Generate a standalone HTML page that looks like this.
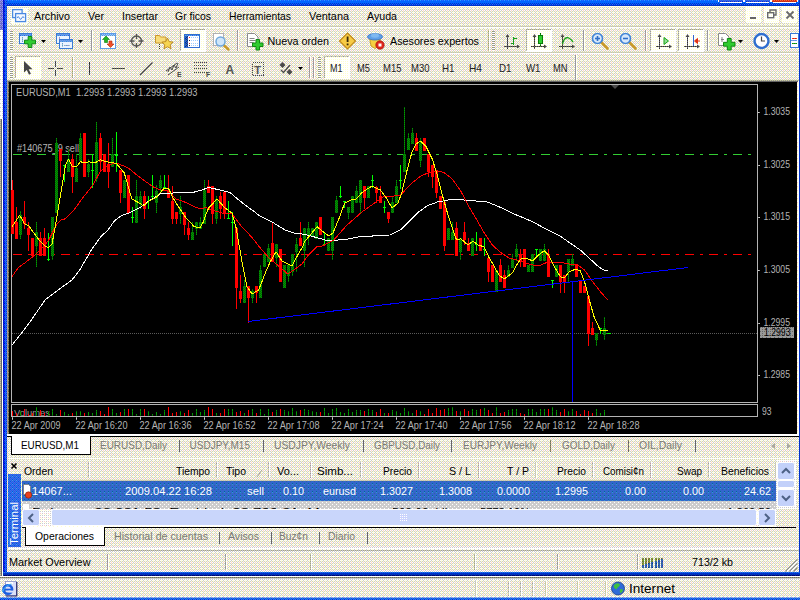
<!DOCTYPE html><html><head><meta charset="utf-8"><title>MetaTrader</title><style>html,body{margin:0;padding:0;background:#ECE9D8;overflow:hidden}svg{display:block}text{font-family:"Liberation Sans",sans-serif;white-space:pre}</style></head><body><svg width="800" height="600" viewBox="0 0 800 600" font-family="'Liberation Sans', sans-serif" shape-rendering="crispEdges"><defs><pattern id="pp" width="4" height="4" patternUnits="userSpaceOnUse"><rect width="4" height="4" fill="#FFFFFF"/><rect x="1" y="1" width="1" height="1" fill="#FFFFCC"/><rect x="3" y="1" width="1" height="1" fill="#FFFFCC"/><rect x="1" y="3" width="1" height="1" fill="#FFFFCC"/><rect x="3" y="3" width="1" height="1" fill="#FFFFCC"/></pattern><pattern id="p1" width="4" height="4" patternUnits="userSpaceOnUse"><rect width="4" height="4" fill="#CCCCCC"/><rect x="0" y="0" width="1" height="1" fill="#FFFFFF"/><rect x="1" y="0" width="1" height="1" fill="#FFFFCC"/><rect x="2" y="0" width="1" height="1" fill="#FFFFFF"/><rect x="1" y="1" width="1" height="1" fill="#FFFFCC"/><rect x="3" y="1" width="1" height="1" fill="#FFFFCC"/><rect x="0" y="2" width="1" height="1" fill="#FFFFFF"/><rect x="2" y="2" width="1" height="1" fill="#FFFFFF"/><rect x="3" y="2" width="1" height="1" fill="#FFCCCC"/><rect x="1" y="3" width="1" height="1" fill="#FFFFCC"/><rect x="3" y="3" width="1" height="1" fill="#FFFFCC"/></pattern><pattern id="p2" width="4" height="4" patternUnits="userSpaceOnUse"><rect width="4" height="4" fill="#6666CC"/><rect x="0" y="0" width="1" height="1" fill="#9999FF"/><rect x="2" y="0" width="1" height="1" fill="#9999FF"/><rect x="1" y="1" width="1" height="1" fill="#9999CC"/><rect x="0" y="2" width="1" height="1" fill="#9999CC"/><rect x="2" y="2" width="1" height="1" fill="#9999FF"/></pattern><pattern id="p3" width="4" height="4" patternUnits="userSpaceOnUse"><rect width="4" height="4" fill="#FFFFFF"/><rect x="2" y="1" width="1" height="1" fill="#CCCCCC"/><rect x="0" y="3" width="1" height="1" fill="#CCCCCC"/><rect x="2" y="3" width="1" height="1" fill="#CCCCCC"/></pattern><pattern id="p4" width="4" height="4" patternUnits="userSpaceOnUse"><rect width="4" height="4" fill="#999999"/><rect x="0" y="0" width="1" height="1" fill="#CCCC99"/><rect x="2" y="0" width="1" height="1" fill="#CCCC99"/><rect x="1" y="1" width="1" height="1" fill="#CCCC99"/><rect x="0" y="2" width="1" height="1" fill="#CCCC99"/><rect x="2" y="2" width="1" height="1" fill="#CCCC99"/><rect x="3" y="3" width="1" height="1" fill="#CC9999"/></pattern><pattern id="p5" width="4" height="4" patternUnits="userSpaceOnUse"><rect width="4" height="4" fill="#666666"/><rect x="0" y="0" width="1" height="1" fill="#999966"/><rect x="2" y="0" width="1" height="1" fill="#999966"/><rect x="2" y="2" width="1" height="1" fill="#999966"/><rect x="0" y="3" width="1" height="1" fill="#666633"/></pattern><pattern id="p6" width="4" height="4" patternUnits="userSpaceOnUse"><rect width="4" height="4" fill="#FFFFFF"/></pattern><pattern id="p7" width="4" height="4" patternUnits="userSpaceOnUse"><rect width="4" height="4" fill="#0066FF"/><rect x="0" y="0" width="1" height="1" fill="#3399FF"/><rect x="2" y="0" width="1" height="1" fill="#3366FF"/><rect x="2" y="1" width="1" height="1" fill="#0066CC"/><rect x="2" y="2" width="1" height="1" fill="#3399FF"/><rect x="0" y="3" width="1" height="1" fill="#0066CC"/></pattern><pattern id="p8" width="4" height="4" patternUnits="userSpaceOnUse"><rect width="4" height="4" fill="#0066FF"/></pattern><pattern id="p9" width="4" height="4" patternUnits="userSpaceOnUse"><rect width="4" height="4" fill="#0033CC"/><rect x="0" y="0" width="1" height="1" fill="#3366FF"/><rect x="1" y="0" width="1" height="1" fill="#0066CC"/><rect x="2" y="0" width="1" height="1" fill="#0066FF"/><rect x="1" y="1" width="1" height="1" fill="#0066FF"/><rect x="3" y="1" width="1" height="1" fill="#0066FF"/><rect x="0" y="2" width="1" height="1" fill="#0066FF"/><rect x="2" y="2" width="1" height="1" fill="#3366FF"/><rect x="1" y="3" width="1" height="1" fill="#0066FF"/><rect x="3" y="3" width="1" height="1" fill="#0066FF"/></pattern><pattern id="p10" width="4" height="4" patternUnits="userSpaceOnUse"><rect width="4" height="4" fill="#0033CC"/><rect x="0" y="0" width="1" height="1" fill="#3366FF"/><rect x="2" y="0" width="1" height="1" fill="#0066FF"/><rect x="1" y="1" width="1" height="1" fill="#0066FF"/><rect x="0" y="2" width="1" height="1" fill="#0066FF"/><rect x="2" y="2" width="1" height="1" fill="#0066FF"/></pattern><pattern id="p11" width="4" height="4" patternUnits="userSpaceOnUse"><rect width="4" height="4" fill="#0033CC"/><rect x="0" y="0" width="1" height="1" fill="#3366FF"/><rect x="2" y="2" width="1" height="1" fill="#0066CC"/></pattern><pattern id="p12" width="4" height="4" patternUnits="userSpaceOnUse"><rect width="4" height="4" fill="#FFFFFF"/><rect x="3" y="0" width="1" height="1" fill="#FFFFCC"/><rect x="0" y="1" width="1" height="1" fill="#FFFFCC"/><rect x="2" y="1" width="1" height="1" fill="#CCCCCC"/><rect x="1" y="2" width="1" height="1" fill="#FFFFCC"/><rect x="3" y="2" width="1" height="1" fill="#FFFFCC"/><rect x="0" y="3" width="1" height="1" fill="#CCCCCC"/><rect x="2" y="3" width="1" height="1" fill="#CCCCCC"/></pattern><pattern id="p13" width="4" height="4" patternUnits="userSpaceOnUse"><rect width="4" height="4" fill="#0000CC"/><rect x="0" y="0" width="1" height="1" fill="#0033FF"/><rect x="2" y="0" width="1" height="1" fill="#0033CC"/><rect x="1" y="1" width="1" height="1" fill="#0033CC"/><rect x="3" y="1" width="1" height="1" fill="#0033CC"/><rect x="0" y="2" width="1" height="1" fill="#0033CC"/><rect x="2" y="2" width="1" height="1" fill="#0033CC"/><rect x="1" y="3" width="1" height="1" fill="#0033CC"/><rect x="3" y="3" width="1" height="1" fill="#0033CC"/></pattern><pattern id="p14" width="4" height="4" patternUnits="userSpaceOnUse"><rect width="4" height="4" fill="#0033CC"/><rect x="0" y="0" width="1" height="1" fill="#3333FF"/><rect x="2" y="0" width="1" height="1" fill="#3333FF"/><rect x="0" y="2" width="1" height="1" fill="#0033FF"/><rect x="2" y="2" width="1" height="1" fill="#3333FF"/><rect x="0" y="3" width="1" height="1" fill="#0000CC"/></pattern><pattern id="p15" width="4" height="4" patternUnits="userSpaceOnUse"><rect width="4" height="4" fill="#3366FF"/><rect x="0" y="0" width="1" height="1" fill="#3399FF"/><rect x="1" y="0" width="1" height="1" fill="#0066FF"/><rect x="3" y="0" width="1" height="1" fill="#0066FF"/><rect x="0" y="1" width="1" height="1" fill="#0066CC"/><rect x="2" y="1" width="1" height="1" fill="#0066CC"/><rect x="1" y="2" width="1" height="1" fill="#0066CC"/><rect x="3" y="2" width="1" height="1" fill="#0066FF"/><rect x="0" y="3" width="1" height="1" fill="#0066CC"/><rect x="1" y="3" width="1" height="1" fill="#0066FF"/><rect x="2" y="3" width="1" height="1" fill="#0066CC"/></pattern><pattern id="p16" width="4" height="4" patternUnits="userSpaceOnUse"><rect width="4" height="4" fill="#0066CC"/><rect x="0" y="0" width="1" height="1" fill="#3366FF"/><rect x="2" y="0" width="1" height="1" fill="#3366FF"/><rect x="0" y="1" width="1" height="1" fill="#0033CC"/><rect x="1" y="1" width="1" height="1" fill="#0066FF"/><rect x="2" y="1" width="1" height="1" fill="#0033CC"/><rect x="0" y="2" width="1" height="1" fill="#0066FF"/><rect x="1" y="2" width="1" height="1" fill="#0033CC"/><rect x="2" y="2" width="1" height="1" fill="#3366FF"/><rect x="0" y="3" width="1" height="1" fill="#0033CC"/><rect x="2" y="3" width="1" height="1" fill="#0033CC"/></pattern><pattern id="p17" width="4" height="4" patternUnits="userSpaceOnUse"><rect width="4" height="4" fill="#3366CC"/><rect x="0" y="0" width="1" height="1" fill="#3366FF"/><rect x="2" y="0" width="1" height="1" fill="#3366FF"/><rect x="0" y="1" width="1" height="1" fill="#3333CC"/><rect x="1" y="1" width="1" height="1" fill="#3366FF"/><rect x="2" y="1" width="1" height="1" fill="#0033CC"/><rect x="0" y="2" width="1" height="1" fill="#3366FF"/><rect x="2" y="2" width="1" height="1" fill="#3366FF"/><rect x="0" y="3" width="1" height="1" fill="#0033CC"/><rect x="2" y="3" width="1" height="1" fill="#0033CC"/></pattern><pattern id="p18" width="4" height="4" patternUnits="userSpaceOnUse"><rect width="4" height="4" fill="#CC3300"/><rect x="0" y="0" width="1" height="1" fill="#FF6633"/><rect x="1" y="0" width="1" height="1" fill="#CC3333"/><rect x="2" y="0" width="1" height="1" fill="#FF6633"/><rect x="1" y="1" width="1" height="1" fill="#CC3333"/><rect x="3" y="1" width="1" height="1" fill="#CC3333"/><rect x="0" y="2" width="1" height="1" fill="#FF6633"/><rect x="2" y="2" width="1" height="1" fill="#FF6633"/><rect x="1" y="3" width="1" height="1" fill="#CC3333"/><rect x="3" y="3" width="1" height="1" fill="#CC3333"/></pattern><pattern id="p19" width="4" height="4" patternUnits="userSpaceOnUse"><rect width="4" height="4" fill="#FFFFFF"/><rect x="3" y="0" width="1" height="1" fill="#FFFFCC"/><rect x="0" y="1" width="1" height="1" fill="#FFCCCC"/><rect x="2" y="1" width="1" height="1" fill="#CCCCCC"/><rect x="1" y="2" width="1" height="1" fill="#FFFFCC"/><rect x="3" y="2" width="1" height="1" fill="#FFFFCC"/><rect x="0" y="3" width="1" height="1" fill="#CCCCCC"/><rect x="2" y="3" width="1" height="1" fill="#CCCCCC"/></pattern><pattern id="p20" width="4" height="4" patternUnits="userSpaceOnUse"><rect width="4" height="4" fill="#0066CC"/><rect x="0" y="0" width="1" height="1" fill="#3366FF"/><rect x="2" y="0" width="1" height="1" fill="#3366FF"/><rect x="1" y="1" width="1" height="1" fill="#0066FF"/><rect x="2" y="1" width="1" height="1" fill="#0033CC"/><rect x="3" y="1" width="1" height="1" fill="#0066FF"/><rect x="0" y="2" width="1" height="1" fill="#3366FF"/><rect x="2" y="2" width="1" height="1" fill="#3366FF"/><rect x="0" y="3" width="1" height="1" fill="#0033CC"/><rect x="1" y="3" width="1" height="1" fill="#0066FF"/><rect x="2" y="3" width="1" height="1" fill="#0033CC"/><rect x="3" y="3" width="1" height="1" fill="#0066FF"/></pattern><pattern id="p21" width="4" height="4" patternUnits="userSpaceOnUse"><rect width="4" height="4" fill="#0033CC"/><rect x="3" y="0" width="1" height="1" fill="#003399"/><rect x="0" y="1" width="1" height="1" fill="#003399"/><rect x="2" y="1" width="1" height="1" fill="#000099"/><rect x="1" y="2" width="1" height="1" fill="#003399"/><rect x="3" y="2" width="1" height="1" fill="#003399"/><rect x="0" y="3" width="1" height="1" fill="#000099"/><rect x="2" y="3" width="1" height="1" fill="#000099"/></pattern><pattern id="p22" width="4" height="4" patternUnits="userSpaceOnUse"><rect width="4" height="4" fill="#003399"/><rect x="1" y="0" width="1" height="1" fill="#000099"/><rect x="3" y="0" width="1" height="1" fill="#000099"/><rect x="0" y="1" width="1" height="1" fill="#000066"/><rect x="2" y="1" width="1" height="1" fill="#000066"/><rect x="3" y="1" width="1" height="1" fill="#000099"/><rect x="1" y="2" width="1" height="1" fill="#000099"/><rect x="3" y="2" width="1" height="1" fill="#000099"/><rect x="0" y="3" width="1" height="1" fill="#000066"/><rect x="1" y="3" width="1" height="1" fill="#000099"/><rect x="2" y="3" width="1" height="1" fill="#000066"/></pattern><pattern id="p23" width="4" height="4" patternUnits="userSpaceOnUse"><rect width="4" height="4" fill="#999966"/><rect x="0" y="0" width="1" height="1" fill="#999999"/><rect x="2" y="0" width="1" height="1" fill="#999999"/><rect x="3" y="0" width="1" height="1" fill="#996666"/><rect x="0" y="1" width="1" height="1" fill="#666666"/><rect x="2" y="1" width="1" height="1" fill="#666666"/><rect x="1" y="2" width="1" height="1" fill="#666666"/><rect x="2" y="2" width="1" height="1" fill="#999999"/><rect x="0" y="3" width="1" height="1" fill="#666666"/><rect x="2" y="3" width="1" height="1" fill="#666666"/></pattern><pattern id="p24" width="4" height="4" patternUnits="userSpaceOnUse"><rect width="4" height="4" fill="#CCCCCC"/><rect x="0" y="3" width="1" height="1" fill="#999999"/></pattern><pattern id="p25" width="4" height="4" patternUnits="userSpaceOnUse"><rect width="4" height="4" fill="#FFFFFF"/><rect x="0" y="1" width="1" height="1" fill="#FFFFCC"/><rect x="2" y="1" width="1" height="1" fill="#CCCCCC"/><rect x="1" y="2" width="1" height="1" fill="#FFFFCC"/><rect x="0" y="3" width="1" height="1" fill="#CCCCCC"/><rect x="2" y="3" width="1" height="1" fill="#CCCCCC"/></pattern><pattern id="p26" width="4" height="4" patternUnits="userSpaceOnUse"><rect width="4" height="4" fill="#99CCFF"/><rect x="1" y="0" width="1" height="1" fill="#9999FF"/><rect x="3" y="0" width="1" height="1" fill="#9999CC"/><rect x="0" y="1" width="1" height="1" fill="#9999CC"/><rect x="2" y="1" width="1" height="1" fill="#6699CC"/><rect x="3" y="1" width="1" height="1" fill="#9999FF"/><rect x="1" y="2" width="1" height="1" fill="#9999CC"/><rect x="3" y="2" width="1" height="1" fill="#9999CC"/><rect x="0" y="3" width="1" height="1" fill="#6699CC"/><rect x="1" y="3" width="1" height="1" fill="#9999FF"/><rect x="2" y="3" width="1" height="1" fill="#6699CC"/><rect x="3" y="3" width="1" height="1" fill="#9999FF"/></pattern><pattern id="p27" width="4" height="4" patternUnits="userSpaceOnUse"><rect width="4" height="4" fill="#3366FF"/><rect x="1" y="0" width="1" height="1" fill="#3366CC"/><rect x="3" y="0" width="1" height="1" fill="#0066CC"/><rect x="0" y="1" width="1" height="1" fill="#0066CC"/><rect x="2" y="1" width="1" height="1" fill="#0066CC"/><rect x="1" y="2" width="1" height="1" fill="#0066CC"/><rect x="3" y="2" width="1" height="1" fill="#0066CC"/><rect x="0" y="3" width="1" height="1" fill="#0033CC"/><rect x="2" y="3" width="1" height="1" fill="#0066CC"/></pattern><pattern id="p28" width="4" height="4" patternUnits="userSpaceOnUse"><rect width="4" height="4" fill="#CCCCCC"/><rect x="1" y="0" width="1" height="1" fill="#CCCC99"/><rect x="3" y="0" width="1" height="1" fill="#CCCC99"/><rect x="0" y="1" width="1" height="1" fill="#CCCC99"/><rect x="2" y="1" width="1" height="1" fill="#999999"/><rect x="1" y="2" width="1" height="1" fill="#CCCC99"/><rect x="3" y="2" width="1" height="1" fill="#CCCC99"/><rect x="0" y="3" width="1" height="1" fill="#999999"/><rect x="1" y="3" width="1" height="1" fill="#CCCC99"/><rect x="2" y="3" width="1" height="1" fill="#CC9999"/></pattern><pattern id="p29" width="4" height="4" patternUnits="userSpaceOnUse"><rect width="4" height="4" fill="#666666"/><rect x="0" y="0" width="1" height="1" fill="#999999"/></pattern><pattern id="p30" width="4" height="4" patternUnits="userSpaceOnUse"><rect width="4" height="4" fill="#999999"/><rect x="0" y="0" width="1" height="1" fill="#CCCC99"/><rect x="2" y="0" width="1" height="1" fill="#CCCC99"/><rect x="2" y="1" width="1" height="1" fill="#999966"/><rect x="0" y="2" width="1" height="1" fill="#CC9999"/><rect x="2" y="2" width="1" height="1" fill="#CCCC99"/><rect x="0" y="3" width="1" height="1" fill="#999966"/></pattern><pattern id="p31" width="4" height="4" patternUnits="userSpaceOnUse"><rect width="4" height="4" fill="#FFFFFF"/><rect x="2" y="1" width="1" height="1" fill="#FFCCCC"/><rect x="0" y="3" width="1" height="1" fill="#CCCCCC"/><rect x="2" y="3" width="1" height="1" fill="#FFFFCC"/></pattern><pattern id="p32" width="4" height="4" patternUnits="userSpaceOnUse"><rect width="4" height="4" fill="#6699FF"/><rect x="1" y="0" width="1" height="1" fill="#6699CC"/><rect x="3" y="0" width="1" height="1" fill="#6699CC"/><rect x="0" y="1" width="1" height="1" fill="#6699CC"/><rect x="2" y="1" width="1" height="1" fill="#3399CC"/><rect x="1" y="2" width="1" height="1" fill="#6699CC"/><rect x="3" y="2" width="1" height="1" fill="#6699CC"/><rect x="0" y="3" width="1" height="1" fill="#3366CC"/><rect x="2" y="3" width="1" height="1" fill="#3399CC"/></pattern><pattern id="p33" width="4" height="4" patternUnits="userSpaceOnUse"><rect width="4" height="4" fill="#9999CC"/><rect x="0" y="0" width="1" height="1" fill="#99CCCC"/><rect x="2" y="0" width="1" height="1" fill="#99CCCC"/><rect x="1" y="1" width="1" height="1" fill="#99CCCC"/><rect x="2" y="1" width="1" height="1" fill="#6699CC"/><rect x="0" y="2" width="1" height="1" fill="#99CCCC"/><rect x="2" y="2" width="1" height="1" fill="#99CCCC"/><rect x="0" y="3" width="1" height="1" fill="#669999"/><rect x="2" y="3" width="1" height="1" fill="#6699CC"/></pattern><pattern id="p34" width="4" height="4" patternUnits="userSpaceOnUse"><rect width="4" height="4" fill="#999999"/><rect x="0" y="0" width="1" height="1" fill="#CCCC99"/><rect x="2" y="0" width="1" height="1" fill="#CCCC99"/><rect x="1" y="1" width="1" height="1" fill="#CC9999"/><rect x="0" y="2" width="1" height="1" fill="#CCCC99"/><rect x="2" y="2" width="1" height="1" fill="#CCCC99"/><rect x="0" y="3" width="1" height="1" fill="#999966"/></pattern><pattern id="p35" width="4" height="4" patternUnits="userSpaceOnUse"><rect width="4" height="4" fill="#99CCFF"/><rect x="1" y="0" width="1" height="1" fill="#6699FF"/><rect x="3" y="0" width="1" height="1" fill="#6699FF"/><rect x="0" y="1" width="1" height="1" fill="#6699CC"/><rect x="2" y="1" width="1" height="1" fill="#6699CC"/><rect x="1" y="2" width="1" height="1" fill="#6699CC"/><rect x="3" y="2" width="1" height="1" fill="#6699FF"/><rect x="0" y="3" width="1" height="1" fill="#6699CC"/><rect x="2" y="3" width="1" height="1" fill="#6699CC"/></pattern><pattern id="p36" width="4" height="4" patternUnits="userSpaceOnUse"><rect width="4" height="4" fill="#999999"/><rect x="0" y="0" width="1" height="1" fill="#CCCCCC"/><rect x="1" y="0" width="1" height="1" fill="#CCCC99"/><rect x="2" y="0" width="1" height="1" fill="#CCCCCC"/><rect x="1" y="1" width="1" height="1" fill="#CCCC99"/><rect x="3" y="1" width="1" height="1" fill="#CCCC99"/><rect x="0" y="2" width="1" height="1" fill="#CCCCCC"/><rect x="2" y="2" width="1" height="1" fill="#CCCCCC"/><rect x="3" y="2" width="1" height="1" fill="#CC9999"/><rect x="1" y="3" width="1" height="1" fill="#CCCC99"/><rect x="3" y="3" width="1" height="1" fill="#CCCC99"/></pattern><pattern id="p37" width="4" height="4" patternUnits="userSpaceOnUse"><rect width="4" height="4" fill="#003399"/><rect x="0" y="0" width="1" height="1" fill="#3366CC"/><rect x="1" y="0" width="1" height="1" fill="#336699"/><rect x="2" y="0" width="1" height="1" fill="#3366CC"/><rect x="1" y="1" width="1" height="1" fill="#3366CC"/><rect x="3" y="1" width="1" height="1" fill="#336699"/><rect x="0" y="2" width="1" height="1" fill="#3366CC"/><rect x="2" y="2" width="1" height="1" fill="#3366CC"/><rect x="3" y="2" width="1" height="1" fill="#333399"/><rect x="1" y="3" width="1" height="1" fill="#336699"/><rect x="3" y="3" width="1" height="1" fill="#336699"/></pattern><pattern id="p38" width="4" height="4" patternUnits="userSpaceOnUse"><rect width="4" height="4" fill="#FF3333"/><rect x="1" y="0" width="1" height="1" fill="#CC3333"/><rect x="3" y="0" width="1" height="1" fill="#CC0000"/><rect x="0" y="1" width="1" height="1" fill="#CC0000"/><rect x="2" y="1" width="1" height="1" fill="#CC0000"/><rect x="3" y="1" width="1" height="1" fill="#CC3333"/><rect x="1" y="2" width="1" height="1" fill="#CC0000"/><rect x="3" y="2" width="1" height="1" fill="#CC3333"/><rect x="0" y="3" width="1" height="1" fill="#CC0000"/><rect x="1" y="3" width="1" height="1" fill="#CC3333"/><rect x="2" y="3" width="1" height="1" fill="#CC0000"/></pattern><pattern id="p39" width="4" height="4" patternUnits="userSpaceOnUse"><rect width="4" height="4" fill="#99CCFF"/><rect x="0" y="0" width="1" height="1" fill="#CCCCFF"/><rect x="0" y="1" width="1" height="1" fill="#9999CC"/><rect x="2" y="1" width="1" height="1" fill="#9999CC"/><rect x="1" y="2" width="1" height="1" fill="#99CCCC"/><rect x="0" y="3" width="1" height="1" fill="#9999CC"/><rect x="2" y="3" width="1" height="1" fill="#9999CC"/></pattern><pattern id="p40" width="4" height="4" patternUnits="userSpaceOnUse"><rect width="4" height="4" fill="#333333"/><rect x="0" y="0" width="1" height="1" fill="#666666"/><rect x="2" y="0" width="1" height="1" fill="#666666"/><rect x="1" y="1" width="1" height="1" fill="#666666"/><rect x="3" y="1" width="1" height="1" fill="#666666"/><rect x="0" y="2" width="1" height="1" fill="#666666"/><rect x="2" y="2" width="1" height="1" fill="#666666"/><rect x="3" y="3" width="1" height="1" fill="#666666"/></pattern><pattern id="p41" width="4" height="4" patternUnits="userSpaceOnUse"><rect width="4" height="4" fill="#006600"/><rect x="0" y="0" width="1" height="1" fill="#339933"/><rect x="2" y="0" width="1" height="1" fill="#339933"/><rect x="1" y="1" width="1" height="1" fill="#009900"/><rect x="0" y="2" width="1" height="1" fill="#009900"/><rect x="2" y="2" width="1" height="1" fill="#339933"/><rect x="3" y="3" width="1" height="1" fill="#009900"/></pattern><pattern id="p42" width="4" height="4" patternUnits="userSpaceOnUse"><rect width="4" height="4" fill="#3366CC"/><rect x="0" y="0" width="1" height="1" fill="#3399CC"/><rect x="2" y="0" width="1" height="1" fill="#3399CC"/><rect x="2" y="2" width="1" height="1" fill="#3399CC"/><rect x="0" y="3" width="1" height="1" fill="#006699"/></pattern><pattern id="p43" width="4" height="4" patternUnits="userSpaceOnUse"><rect width="4" height="4" fill="#CC3300"/><rect x="0" y="0" width="1" height="1" fill="#FF3333"/><rect x="2" y="0" width="1" height="1" fill="#FF3333"/><rect x="1" y="1" width="1" height="1" fill="#FF3333"/><rect x="0" y="2" width="1" height="1" fill="#FF3333"/><rect x="2" y="2" width="1" height="1" fill="#FF3333"/><rect x="0" y="3" width="1" height="1" fill="#CC0000"/><rect x="3" y="3" width="1" height="1" fill="#FF3300"/></pattern><pattern id="p44" width="4" height="4" patternUnits="userSpaceOnUse"><rect width="4" height="4" fill="#009900"/><rect x="0" y="0" width="1" height="1" fill="#33CC33"/><rect x="2" y="0" width="1" height="1" fill="#339933"/><rect x="1" y="1" width="1" height="1" fill="#339933"/><rect x="3" y="1" width="1" height="1" fill="#339933"/><rect x="0" y="2" width="1" height="1" fill="#339933"/><rect x="2" y="2" width="1" height="1" fill="#33CC33"/><rect x="1" y="3" width="1" height="1" fill="#339933"/><rect x="3" y="3" width="1" height="1" fill="#339933"/></pattern><pattern id="p45" width="4" height="4" patternUnits="userSpaceOnUse"><rect width="4" height="4" fill="#FFFFFF"/><rect x="1" y="0" width="1" height="1" fill="#FFFFCC"/><rect x="3" y="0" width="1" height="1" fill="#FFFFCC"/><rect x="0" y="1" width="1" height="1" fill="#CCCCCC"/><rect x="2" y="1" width="1" height="1" fill="#CCCCCC"/><rect x="1" y="2" width="1" height="1" fill="#FFCCCC"/><rect x="3" y="2" width="1" height="1" fill="#FFFFCC"/><rect x="0" y="3" width="1" height="1" fill="#CCCCCC"/><rect x="1" y="3" width="1" height="1" fill="#FFFFCC"/><rect x="2" y="3" width="1" height="1" fill="#CCCCCC"/></pattern><pattern id="p46" width="4" height="4" patternUnits="userSpaceOnUse"><rect width="4" height="4" fill="#CCCCCC"/><rect x="1" y="0" width="1" height="1" fill="#999999"/><rect x="3" y="0" width="1" height="1" fill="#999999"/><rect x="0" y="1" width="1" height="1" fill="#999999"/><rect x="2" y="1" width="1" height="1" fill="#999999"/><rect x="1" y="2" width="1" height="1" fill="#999999"/><rect x="3" y="2" width="1" height="1" fill="#999999"/><rect x="0" y="3" width="1" height="1" fill="#999999"/><rect x="2" y="3" width="1" height="1" fill="#999999"/></pattern><pattern id="p47" width="4" height="4" patternUnits="userSpaceOnUse"><rect width="4" height="4" fill="#FF0000"/></pattern><pattern id="p48" width="4" height="4" patternUnits="userSpaceOnUse"><rect width="4" height="4" fill="#009900"/><rect x="1" y="0" width="1" height="1" fill="#006600"/><rect x="3" y="0" width="1" height="1" fill="#006600"/><rect x="0" y="1" width="1" height="1" fill="#006600"/><rect x="2" y="1" width="1" height="1" fill="#006600"/><rect x="1" y="2" width="1" height="1" fill="#006600"/><rect x="3" y="2" width="1" height="1" fill="#006600"/><rect x="0" y="3" width="1" height="1" fill="#006600"/><rect x="2" y="3" width="1" height="1" fill="#006600"/></pattern><pattern id="p49" width="4" height="4" patternUnits="userSpaceOnUse"><rect width="4" height="4" fill="#00FF00"/></pattern><pattern id="p50" width="4" height="4" patternUnits="userSpaceOnUse"><rect width="4" height="4" fill="#009900"/><rect x="2" y="1" width="1" height="1" fill="#006600"/><rect x="0" y="3" width="1" height="1" fill="#006600"/><rect x="2" y="3" width="1" height="1" fill="#006600"/></pattern><pattern id="p51" width="4" height="4" patternUnits="userSpaceOnUse"><rect width="4" height="4" fill="#0000FF"/></pattern><pattern id="p52" width="4" height="4" patternUnits="userSpaceOnUse"><rect width="4" height="4" fill="#999999"/><rect x="2" y="1" width="1" height="1" fill="#666666"/><rect x="0" y="3" width="1" height="1" fill="#666666"/><rect x="2" y="3" width="1" height="1" fill="#666666"/></pattern><pattern id="p53" width="4" height="4" patternUnits="userSpaceOnUse"><rect width="4" height="4" fill="#666666"/><rect x="0" y="0" width="1" height="1" fill="#999966"/><rect x="2" y="0" width="1" height="1" fill="#999966"/><rect x="2" y="2" width="1" height="1" fill="#999966"/></pattern><pattern id="p54" width="4" height="4" patternUnits="userSpaceOnUse"><rect width="4" height="4" fill="#3366FF"/><rect x="0" y="0" width="1" height="1" fill="#3399FF"/><rect x="1" y="0" width="1" height="1" fill="#3366CC"/><rect x="3" y="0" width="1" height="1" fill="#3366CC"/><rect x="0" y="1" width="1" height="1" fill="#3366CC"/><rect x="2" y="1" width="1" height="1" fill="#0066CC"/><rect x="1" y="2" width="1" height="1" fill="#3366CC"/><rect x="3" y="2" width="1" height="1" fill="#3366CC"/><rect x="0" y="3" width="1" height="1" fill="#0066CC"/><rect x="2" y="3" width="1" height="1" fill="#3366CC"/></pattern><pattern id="p55" width="4" height="4" patternUnits="userSpaceOnUse"><rect width="4" height="4" fill="#3366CC"/><rect x="0" y="0" width="1" height="1" fill="#3399CC"/><rect x="2" y="1" width="1" height="1" fill="#336699"/><rect x="0" y="3" width="1" height="1" fill="#006699"/></pattern><pattern id="p56" width="4" height="4" patternUnits="userSpaceOnUse"><rect width="4" height="4" fill="#CCCCCC"/><rect x="0" y="0" width="1" height="1" fill="#FFFFFF"/><rect x="2" y="2" width="1" height="1" fill="#FFFFFF"/></pattern><pattern id="p57" width="4" height="4" patternUnits="userSpaceOnUse"><rect width="4" height="4" fill="#FFFFFF"/><rect x="0" y="1" width="1" height="1" fill="#FFCCCC"/><rect x="2" y="1" width="1" height="1" fill="#CCCCCC"/><rect x="1" y="2" width="1" height="1" fill="#FFFFCC"/><rect x="0" y="3" width="1" height="1" fill="#CCCCCC"/><rect x="2" y="3" width="1" height="1" fill="#CCCCCC"/></pattern><pattern id="p58" width="4" height="4" patternUnits="userSpaceOnUse"><rect width="4" height="4" fill="#FFFFFF"/><rect x="0" y="1" width="1" height="1" fill="#CCCCFF"/><rect x="2" y="1" width="1" height="1" fill="#CCCCFF"/><rect x="1" y="2" width="1" height="1" fill="#CCFFFF"/><rect x="0" y="3" width="1" height="1" fill="#CCCCFF"/><rect x="2" y="3" width="1" height="1" fill="#CCCCFF"/></pattern><pattern id="p59" width="4" height="4" patternUnits="userSpaceOnUse"><rect width="4" height="4" fill="#999999"/><rect x="0" y="0" width="1" height="1" fill="#CCCCCC"/><rect x="1" y="0" width="1" height="1" fill="#CC9999"/><rect x="2" y="0" width="1" height="1" fill="#CCCCCC"/><rect x="1" y="1" width="1" height="1" fill="#CCCC99"/><rect x="3" y="1" width="1" height="1" fill="#CCCC99"/><rect x="0" y="2" width="1" height="1" fill="#CCCC99"/><rect x="2" y="2" width="1" height="1" fill="#CCCCCC"/><rect x="1" y="3" width="1" height="1" fill="#CCCC99"/><rect x="3" y="3" width="1" height="1" fill="#CCCC99"/></pattern><pattern id="p60" width="4" height="4" patternUnits="userSpaceOnUse"><rect width="4" height="4" fill="#669933"/><rect x="0" y="0" width="1" height="1" fill="#999966"/><rect x="2" y="0" width="1" height="1" fill="#999933"/><rect x="0" y="1" width="1" height="1" fill="#666633"/><rect x="1" y="1" width="1" height="1" fill="#999933"/><rect x="2" y="1" width="1" height="1" fill="#666633"/><rect x="0" y="2" width="1" height="1" fill="#999933"/><rect x="1" y="2" width="1" height="1" fill="#666633"/><rect x="2" y="2" width="1" height="1" fill="#999966"/><rect x="0" y="3" width="1" height="1" fill="#666633"/><rect x="2" y="3" width="1" height="1" fill="#666633"/><rect x="3" y="3" width="1" height="1" fill="#999933"/></pattern><pattern id="p61" width="4" height="4" patternUnits="userSpaceOnUse"><rect width="4" height="4" fill="#336699"/><rect x="0" y="0" width="1" height="1" fill="#3366CC"/><rect x="2" y="0" width="1" height="1" fill="#3366CC"/><rect x="1" y="1" width="1" height="1" fill="#3366CC"/><rect x="2" y="1" width="1" height="1" fill="#333399"/><rect x="0" y="2" width="1" height="1" fill="#3366CC"/><rect x="2" y="2" width="1" height="1" fill="#3366CC"/><rect x="0" y="3" width="1" height="1" fill="#003399"/></pattern></defs>
<rect x="0" y="0" width="800" height="600" fill="url(#p1)" />
<rect x="0" y="0" width="3" height="30" fill="url(#p2)" />
<rect x="0" y="30" width="3" height="89" fill="url(#p3)" />
<rect x="0" y="119" width="1" height="459" fill="url(#p4)" />
<rect x="1" y="119" width="1" height="459" fill="url(#p5)" />
<rect x="2" y="119" width="1" height="459" fill="url(#p6)" />
<rect x="3" y="0" width="797" height="1" fill="url(#p7)" />
<rect x="3" y="1" width="797" height="2" fill="url(#p8)" />
<rect x="3" y="3" width="797" height="1" fill="url(#p9)" />
<rect x="3" y="4" width="797" height="1" fill="url(#p10)" />
<rect x="3" y="5" width="797" height="1" fill="url(#p11)" />
<rect x="7" y="6" width="792" height="1" fill="url(#p12)" />
<rect x="3" y="0" width="1" height="576" fill="url(#p13)" />
<rect x="4" y="0" width="1" height="576" fill="url(#p14)" />
<rect x="5" y="0" width="1" height="576" fill="url(#p15)" />
<rect x="6" y="0" width="1" height="576" fill="url(#p16)" />
<rect x="799" y="0" width="1" height="576" fill="url(#p14)" />
<rect x="719" y="0" width="24" height="2" fill="url(#p17)" />
<rect x="718" y="0" width="1" height="2" fill="url(#p6)" />
<rect x="743" y="0" width="1" height="2" fill="url(#p6)" />
<rect x="720" y="2" width="22" height="1" fill="url(#p6)" />
<rect x="745" y="0" width="25" height="2" fill="url(#p17)" />
<rect x="744" y="0" width="1" height="2" fill="url(#p6)" />
<rect x="770" y="0" width="1" height="2" fill="url(#p6)" />
<rect x="746" y="2" width="23" height="1" fill="url(#p6)" />
<rect x="772" y="0" width="25" height="2" fill="url(#p18)" />
<rect x="771" y="0" width="1" height="2" fill="url(#p6)" />
<rect x="797" y="0" width="1" height="2" fill="url(#p6)" />
<rect x="773" y="2" width="23" height="1" fill="url(#p6)" />
<rect x="7" y="571" width="792" height="1" fill="url(#p19)" />
<rect x="3" y="572" width="797" height="1" fill="url(#p20)" />
<rect x="3" y="573" width="797" height="1" fill="url(#p14)" />
<rect x="3" y="574" width="797" height="1" fill="url(#p21)" />
<rect x="3" y="575" width="797" height="1" fill="url(#p22)" />
<rect x="0" y="576" width="800" height="1" fill="url(#p6)" />
<rect x="0" y="577" width="800" height="1" fill="url(#p23)" />
<rect x="0" y="578" width="800" height="1" fill="url(#p24)" />
<rect x="0" y="579" width="800" height="1" fill="url(#p25)" />
<rect x="0" y="597" width="800" height="1" fill="url(#p26)" />
<rect x="0" y="598" width="800" height="2" fill="url(#p27)" />
<rect x="7" y="26" width="792" height="1" fill="url(#p28)" />
<rect x="7" y="27" width="792" height="1" fill="url(#p6)" />
<text x="34" y="20" fill="#000" font-size="11" text-anchor="start" xml:space="preserve" textLength="36" lengthAdjust="spacingAndGlyphs">Archivo</text>
<text x="88" y="20" fill="#000" font-size="11" text-anchor="start" xml:space="preserve" textLength="16" lengthAdjust="spacingAndGlyphs">Ver</text>
<text x="122" y="20" fill="#000" font-size="11" text-anchor="start" xml:space="preserve" textLength="36" lengthAdjust="spacingAndGlyphs">Insertar</text>
<text x="175" y="20" fill="#000" font-size="11" text-anchor="start" xml:space="preserve" textLength="36" lengthAdjust="spacingAndGlyphs">Gr ficos</text>
<text x="229" y="20" fill="#000" font-size="11" text-anchor="start" xml:space="preserve" textLength="62" lengthAdjust="spacingAndGlyphs">Herramientas</text>
<text x="309" y="20" fill="#000" font-size="11" text-anchor="start" xml:space="preserve" textLength="40" lengthAdjust="spacingAndGlyphs">Ventana</text>
<text x="367" y="20" fill="#000" font-size="11" text-anchor="start" xml:space="preserve" textLength="30" lengthAdjust="spacingAndGlyphs">Ayuda</text>
<rect x="7" y="52" width="792" height="1" fill="url(#p28)" />
<rect x="7" y="53" width="792" height="1" fill="url(#p6)" />
<rect x="11" y="8" width="17" height="16" fill="url(#pp)" />
<g shape-rendering="auto" fill="#F4F8FF" stroke="#4A8AE0" stroke-width="1.3"><rect x="12.6" y="9.6" width="9.5" height="8"/><rect x="15.6" y="13.6" width="10" height="8"/></g>
<path d="M17 18q1.2-3 2.4 0t2.4 0t2.4 0" fill="none" stroke="#4A8AE0" stroke-width="1" shape-rendering="auto"/>
<rect x="746" y="7" width="15" height="16" fill="url(#pp)" />
<rect x="764" y="7" width="15" height="16" fill="url(#pp)" />
<rect x="782" y="7" width="15" height="16" fill="url(#pp)" />
<rect x="750" y="17" width="6" height="2" fill="url(#p29)" />
<g fill="none" stroke="#6A6A6A" stroke-width="1.4" shape-rendering="auto"><rect x="767.7" y="12.7" width="6" height="5"/><path d="M770 12v-2h6v5h-2"/><path d="M786.5 11.5l7 7M793.5 11.5l-7 7" stroke-width="1.8"/></g>
<rect x="10" y="31" width="3" height="1" fill="url(#p30)" />
<rect x="10" y="32" width="3" height="1" fill="url(#p31)" />
<rect x="10" y="33" width="3" height="1" fill="url(#p30)" />
<rect x="10" y="34" width="3" height="1" fill="url(#p31)" />
<rect x="10" y="35" width="3" height="1" fill="url(#p30)" />
<rect x="10" y="36" width="3" height="1" fill="url(#p31)" />
<rect x="10" y="37" width="3" height="1" fill="url(#p30)" />
<rect x="10" y="38" width="3" height="1" fill="url(#p31)" />
<rect x="10" y="39" width="3" height="1" fill="url(#p30)" />
<rect x="10" y="40" width="3" height="1" fill="url(#p31)" />
<rect x="10" y="41" width="3" height="1" fill="url(#p30)" />
<rect x="10" y="42" width="3" height="1" fill="url(#p31)" />
<rect x="10" y="43" width="3" height="1" fill="url(#p30)" />
<rect x="10" y="44" width="3" height="1" fill="url(#p31)" />
<rect x="10" y="45" width="3" height="1" fill="url(#p30)" />
<rect x="10" y="46" width="3" height="1" fill="url(#p31)" />
<rect x="10" y="47" width="3" height="1" fill="url(#p30)" />
<rect x="10" y="48" width="3" height="1" fill="url(#p31)" />
<rect x="10" y="49" width="3" height="1" fill="url(#p30)" />
<rect x="10" y="50" width="3" height="1" fill="url(#p31)" />
<rect x="19.5" y="33.5" width="12" height="10" fill="#EAF3FF" stroke="#3A7BD5"/>
<rect x="20" y="34" width="11" height="2" fill="url(#p32)" />
<rect x="22" y="37" width="1" height="5" fill="url(#p33)" />
<rect x="24" y="40" width="5" height="1" fill="url(#p33)" />
<path d="M28.166666666666668 36.5h3.6666666666666665v3.6666666666666665h3.6666666666666665v3.6666666666666665h-3.6666666666666665v3.6666666666666665h-3.6666666666666665v-3.6666666666666665h-3.6666666666666665v-3.6666666666666665h3.6666666666666665z" fill="#2FCB2F" stroke="#0E8A12" stroke-width="1" shape-rendering="auto"/>
<path d="M41 40h5l-2.5 3z" fill="#000" shape-rendering="auto"/>
<rect x="56.5" y="33.5" width="13" height="10" fill="#EAF3FF" stroke="#3A7BD5"/>
<rect x="57" y="34" width="12" height="2" fill="url(#p32)" />
<rect x="59" y="37" width="1" height="5" fill="url(#p33)" />
<rect x="61" y="40" width="6" height="1" fill="url(#p33)" />
<rect x="59.5" y="39.5" width="13" height="9" fill="#EAF3FF" stroke="#3A7BD5"/>
<rect x="60" y="40" width="12" height="2" fill="url(#p32)" />
<rect x="62" y="43" width="1" height="4" fill="url(#p33)" />
<rect x="64" y="45" width="6" height="1" fill="url(#p33)" />
<path d="M78 40h5l-2.5 3z" fill="#000" shape-rendering="auto"/>
<rect x="91" y="30" width="1" height="21" fill="url(#p34)" />
<rect x="92" y="30" width="1" height="21" fill="url(#p6)" />
<rect x="100.5" y="33.5" width="15" height="15" fill="#FFFFFF" stroke="#5B9BE8"/>
<rect x="101" y="34" width="14" height="2" fill="url(#p35)" />
<g shape-rendering="auto"><path d="M106 36l-3.5 3.5h2v3h3v-3h2z" fill="#22B422" stroke="#0A7A0A" stroke-width=".6"/><path d="M110.5 47.5l-3.5-3.5h2v-3h3v3h2z" fill="#F0502A" stroke="#B02A0A" stroke-width=".6"/></g>
<g shape-rendering="auto" stroke="#555" fill="none" stroke-width="1.3"><circle cx="136.5" cy="41" r="5"/><path d="M136.5 34v5M136.5 43v5M129.5 41h5M138.500 41h5"/></g>
<g shape-rendering="auto"><path d="M155.5 35.500h4l1 1.5h5.500v6h-10.5z" fill="#F7DC7A" stroke="#C9972A"/><path d="M167.5 38l1.700 3.600l3.900.5l-2.900 2.700l.8 3.900l-3.500-1.900l-3.500 1.900l.8-3.900l-2.900-2.700l3.900-.5z" fill="#F6D552" stroke="#B8851C" stroke-width=".9"/></g>
<rect x="159" y="44" width="1" height="1" fill="#333" />
<rect x="159" y="46" width="1" height="1" fill="#333" />
<rect x="159" y="48" width="1" height="1" fill="#333" />
<rect x="180" y="29" width="26" height="23" fill="url(#pp)" />
<rect x="180" y="29" width="26" height="1" fill="url(#p36)" />
<rect x="180" y="29" width="1" height="23" fill="url(#p36)" />
<rect x="180" y="51" width="26" height="1" fill="url(#p6)" />
<rect x="205" y="29" width="1" height="23" fill="url(#p6)" />
<rect x="184.500" y="34.500" width="15" height="13" fill="#FFFFFF" stroke="#2F6FD0"/>
<rect x="185" y="35" width="3" height="12" fill="url(#p37)" />
<rect x="185" y="35" width="14" height="1" fill="url(#p32)" />
<rect x="189" y="37" width="1" height="1" fill="url(#p38)" />
<rect x="191" y="37" width="1" height="1" fill="url(#p39)" />
<rect x="193" y="37" width="1" height="1" fill="url(#p39)" />
<rect x="195" y="37" width="1" height="1" fill="url(#p39)" />
<rect x="197" y="37" width="1" height="1" fill="url(#p39)" />
<rect x="189" y="40" width="1" height="1" fill="#333" />
<rect x="191" y="40" width="1" height="1" fill="url(#p39)" />
<rect x="193" y="40" width="1" height="1" fill="url(#p39)" />
<rect x="195" y="40" width="1" height="1" fill="url(#p39)" />
<rect x="197" y="40" width="1" height="1" fill="url(#p39)" />
<rect x="189" y="43" width="1" height="1" fill="url(#p38)" />
<rect x="191" y="43" width="1" height="1" fill="url(#p39)" />
<rect x="193" y="43" width="1" height="1" fill="url(#p39)" />
<rect x="195" y="43" width="1" height="1" fill="url(#p39)" />
<rect x="197" y="43" width="1" height="1" fill="url(#p39)" />
<rect x="189" y="45" width="1" height="1" fill="#333" />
<rect x="191" y="45" width="1" height="1" fill="url(#p39)" />
<rect x="193" y="45" width="1" height="1" fill="url(#p39)" />
<rect x="195" y="45" width="1" height="1" fill="url(#p39)" />
<rect x="197" y="45" width="1" height="1" fill="url(#p39)" />
<rect x="213.500" y="33.500" width="10" height="12" fill="#FFFFFF" stroke="#B0B0B0"/>
<g shape-rendering="auto"><line x1="223.500" y1="45" x2="228.500" y2="49.500" stroke="#C89A28" stroke-width="2.4" stroke-linecap="round"/><circle cx="220.500" cy="41.500" r="4.500" fill="#CFE6FA" stroke="#6FA8DC" stroke-width="1.5"/></g>
<rect x="237" y="30" width="1" height="21" fill="url(#p34)" />
<rect x="238" y="30" width="1" height="21" fill="url(#p6)" />
<g shape-rendering="auto"><path d="M247.500 33.500h7l3.500 3.500v9.500h-10.500z" fill="#FFFFFF" stroke="#8A8A8A"/><path d="M249.500 38.500h5M249.500 40.500h6M249.500 42.500h4" stroke="#777" stroke-width=".9"/></g>
<path d="M256.0 39.5h3.5v3.5h3.5v3.5h-3.5v3.5h-3.5v-3.5h-3.5v-3.5h3.5z" fill="#2FCB2F" stroke="#0E8A12" stroke-width="1" shape-rendering="auto"/>
<text x="267.5" y="45" fill="#000" font-size="11" text-anchor="start" xml:space="preserve" textLength="61.5" lengthAdjust="spacingAndGlyphs">Nueva orden</text>
<g shape-rendering="auto"><path d="M347.500 33l8 8l-8 8l-8-8z" fill="#F7CB45" stroke="#C08A18" stroke-width="1.2"/><rect x="346.700" y="36.500" width="1.800" height="5.500" fill="#3A2A08"/><rect x="346.700" y="43.500" width="1.800" height="1.800" fill="#3A2A08"/></g>
<g shape-rendering="auto"><path d="M369.500 38h11l-1.500 8l-4 2.500l-4-2.500z" fill="#F5D040" stroke="#C09018" stroke-width=".8"/><ellipse cx="375" cy="36.800" rx="7.500" ry="3.200" fill="#5FA0E8" stroke="#2F6FC8" stroke-width=".8"/><ellipse cx="375" cy="35.500" rx="4" ry="2.200" fill="#7FB8F0"/><circle cx="380" cy="45" r="4.200" fill="#E0281C" stroke="#A01008" stroke-width=".7"/><rect x="378.500" y="43.500" width="3" height="3" fill="#FFF"/></g>
<text x="390" y="45" fill="#000" font-size="11" text-anchor="start" xml:space="preserve" textLength="89" lengthAdjust="spacingAndGlyphs">Asesores expertos</text>
<rect x="488" y="30" width="1" height="21" fill="url(#p34)" />
<rect x="489" y="30" width="1" height="21" fill="url(#p6)" />
<rect x="492" y="31" width="3" height="1" fill="url(#p30)" />
<rect x="492" y="32" width="3" height="1" fill="url(#p31)" />
<rect x="492" y="33" width="3" height="1" fill="url(#p30)" />
<rect x="492" y="34" width="3" height="1" fill="url(#p31)" />
<rect x="492" y="35" width="3" height="1" fill="url(#p30)" />
<rect x="492" y="36" width="3" height="1" fill="url(#p31)" />
<rect x="492" y="37" width="3" height="1" fill="url(#p30)" />
<rect x="492" y="38" width="3" height="1" fill="url(#p31)" />
<rect x="492" y="39" width="3" height="1" fill="url(#p30)" />
<rect x="492" y="40" width="3" height="1" fill="url(#p31)" />
<rect x="492" y="41" width="3" height="1" fill="url(#p30)" />
<rect x="492" y="42" width="3" height="1" fill="url(#p31)" />
<rect x="492" y="43" width="3" height="1" fill="url(#p30)" />
<rect x="492" y="44" width="3" height="1" fill="url(#p31)" />
<rect x="492" y="45" width="3" height="1" fill="url(#p30)" />
<rect x="492" y="46" width="3" height="1" fill="url(#p31)" />
<rect x="492" y="47" width="3" height="1" fill="url(#p30)" />
<rect x="492" y="48" width="3" height="1" fill="url(#p31)" />
<rect x="492" y="49" width="3" height="1" fill="url(#p30)" />
<rect x="492" y="50" width="3" height="1" fill="url(#p31)" />
<rect x="507" y="35" width="1" height="14" fill="url(#p40)" />
<rect x="504" y="46" width="15" height="1" fill="url(#p40)" />
<path d="M505.5 37l2-3l2 3z M517 44.5l3 2l-3 2z" fill="#4A4A4A" shape-rendering="auto"/>
<path d="M513.500 37v8M513.500 38.500h3M510.500 43.500h3" stroke="#18A018" stroke-width="1.300" fill="none"/>
<rect x="526" y="29" width="26" height="23" fill="url(#pp)" />
<rect x="526" y="29" width="26" height="1" fill="url(#p36)" />
<rect x="526" y="29" width="1" height="23" fill="url(#p36)" />
<rect x="526" y="51" width="26" height="1" fill="url(#p6)" />
<rect x="551" y="29" width="1" height="23" fill="url(#p6)" />
<rect x="534" y="35" width="1" height="14" fill="url(#p40)" />
<rect x="531" y="46" width="15" height="1" fill="url(#p40)" />
<path d="M532.5 37l2-3l2 3z M544 44.5l3 2l-3 2z" fill="#4A4A4A" shape-rendering="auto"/>
<rect x="540" y="33" width="1" height="13" fill="url(#p41)" />
<rect x="538.500" y="35.500" width="4" height="8" fill="#2FD02F" stroke="#0A7A0A"/>
<rect x="562" y="35" width="1" height="14" fill="url(#p40)" />
<rect x="559" y="46" width="15" height="1" fill="url(#p40)" />
<path d="M560.5 37l2-3l2 3z M572 44.5l3 2l-3 2z" fill="#4A4A4A" shape-rendering="auto"/>
<path d="M562.500 44c2-8 6-8 10.500-2" stroke="#18A018" stroke-width="1.300" fill="none" shape-rendering="auto"/>
<rect x="583" y="30" width="1" height="21" fill="url(#p34)" />
<rect x="584" y="30" width="1" height="21" fill="url(#p6)" />
<g shape-rendering="auto"><line x1="601.0" y1="42.0" x2="607.5" y2="48.5" stroke="#C89A28" stroke-width="2.6" stroke-linecap="round"/><circle cx="597.5" cy="38.5" r="5" fill="#D7E8FB" stroke="#3F84D8" stroke-width="1.6"/><line x1="595.0" y1="38.5" x2="600.0" y2="38.5" stroke="#2F6FC8" stroke-width="1.6"/><line x1="597.5" y1="36.0" x2="597.5" y2="41.0" stroke="#2F6FC8" stroke-width="1.6"/></g>
<g shape-rendering="auto"><line x1="629.0" y1="42.0" x2="635.5" y2="48.5" stroke="#C89A28" stroke-width="2.6" stroke-linecap="round"/><circle cx="625.5" cy="38.5" r="5" fill="#D7E8FB" stroke="#3F84D8" stroke-width="1.6"/><line x1="623.0" y1="38.5" x2="628.0" y2="38.5" stroke="#2F6FC8" stroke-width="1.6"/></g>
<rect x="645" y="30" width="1" height="21" fill="url(#p34)" />
<rect x="646" y="30" width="1" height="21" fill="url(#p6)" />
<rect x="650" y="29" width="26" height="23" fill="url(#pp)" />
<rect x="650" y="29" width="26" height="1" fill="url(#p36)" />
<rect x="650" y="29" width="1" height="23" fill="url(#p36)" />
<rect x="650" y="51" width="26" height="1" fill="url(#p6)" />
<rect x="675" y="29" width="1" height="23" fill="url(#p6)" />
<rect x="659" y="35" width="1" height="14" fill="url(#p40)" />
<rect x="656" y="46" width="15" height="1" fill="url(#p40)" />
<path d="M657.5 37l2-3l2 3z M669 44.5l3 2l-3 2z" fill="#4A4A4A" shape-rendering="auto"/>
<path d="M664 37.500l4.500 3.500l-4.500 3.500z" fill="#8FE08F" stroke="#18A018" shape-rendering="auto"/>
<rect x="678" y="29" width="26" height="23" fill="url(#pp)" />
<rect x="678" y="29" width="26" height="1" fill="url(#p36)" />
<rect x="678" y="29" width="1" height="23" fill="url(#p36)" />
<rect x="678" y="51" width="26" height="1" fill="url(#p6)" />
<rect x="703" y="29" width="1" height="23" fill="url(#p6)" />
<rect x="687" y="35" width="1" height="14" fill="url(#p40)" />
<rect x="684" y="46" width="15" height="1" fill="url(#p40)" />
<path d="M685.5 37l2-3l2 3z M697 44.5l3 2l-3 2z" fill="#4A4A4A" shape-rendering="auto"/>
<rect x="693" y="35" width="1" height="11" fill="url(#p42)" />
<path d="M694.500 41l3-2.500v5zM697 41h3" fill="#E03010" stroke="#E03010" stroke-width="1" shape-rendering="auto"/>
<rect x="707" y="30" width="1" height="21" fill="url(#p34)" />
<rect x="708" y="30" width="1" height="21" fill="url(#p6)" />
<g shape-rendering="auto"><path d="M718.500 33.500h7l3.500 3.500v8.500h-10.500z" fill="#FFFFFF" stroke="#8A8A8A"/><path d="M722 37v5M721 39.500h3" stroke="#777" stroke-width=".9"/></g>
<path d="M727.3333333333334 38.5h3.8333333333333335v3.8333333333333335h3.8333333333333335v3.8333333333333335h-3.8333333333333335v3.8333333333333335h-3.8333333333333335v-3.8333333333333335h-3.8333333333333335v-3.8333333333333335h3.8333333333333335z" fill="#2FCB2F" stroke="#0E8A12" stroke-width="1" shape-rendering="auto"/>
<path d="M738 40h5l-2.5 3z" fill="#000" shape-rendering="auto"/>
<g shape-rendering="auto"><circle cx="761.500" cy="41" r="7" fill="#FFFFFF" stroke="#2F6FD0" stroke-width="2.400"/><path d="M761.500 36.500v4.500h3.500" stroke="#444" stroke-width="1.200" fill="none"/></g>
<path d="M774 40h5l-2.5 3z" fill="#000" shape-rendering="auto"/>
<rect x="790.500" y="33.500" width="8" height="14" fill="#FFFFFF" stroke="#3A7BD5"/>
<rect x="792" y="38" width="5" height="1" fill="url(#p43)" />
<rect x="792" y="43" width="5" height="1" fill="url(#p44)" />
<rect x="791" y="40" width="6" height="1" fill="url(#p32)" />
<rect x="10" y="57" width="3" height="1" fill="url(#p30)" />
<rect x="10" y="58" width="3" height="1" fill="url(#p31)" />
<rect x="10" y="59" width="3" height="1" fill="url(#p30)" />
<rect x="10" y="60" width="3" height="1" fill="url(#p31)" />
<rect x="10" y="61" width="3" height="1" fill="url(#p30)" />
<rect x="10" y="62" width="3" height="1" fill="url(#p31)" />
<rect x="10" y="63" width="3" height="1" fill="url(#p30)" />
<rect x="10" y="64" width="3" height="1" fill="url(#p31)" />
<rect x="10" y="65" width="3" height="1" fill="url(#p30)" />
<rect x="10" y="66" width="3" height="1" fill="url(#p31)" />
<rect x="10" y="67" width="3" height="1" fill="url(#p30)" />
<rect x="10" y="68" width="3" height="1" fill="url(#p31)" />
<rect x="10" y="69" width="3" height="1" fill="url(#p30)" />
<rect x="10" y="70" width="3" height="1" fill="url(#p31)" />
<rect x="10" y="71" width="3" height="1" fill="url(#p30)" />
<rect x="10" y="72" width="3" height="1" fill="url(#p31)" />
<rect x="10" y="73" width="3" height="1" fill="url(#p30)" />
<rect x="10" y="74" width="3" height="1" fill="url(#p31)" />
<rect x="10" y="75" width="3" height="1" fill="url(#p30)" />
<rect x="10" y="76" width="3" height="1" fill="url(#p31)" />
<rect x="10" y="77" width="3" height="1" fill="url(#p30)" />
<rect x="10" y="78" width="3" height="1" fill="url(#p31)" />
<rect x="15" y="56" width="26" height="23" fill="url(#pp)" />
<rect x="15" y="56" width="26" height="1" fill="url(#p36)" />
<rect x="15" y="56" width="1" height="23" fill="url(#p36)" />
<rect x="15" y="78" width="26" height="1" fill="url(#p6)" />
<rect x="40" y="56" width="1" height="23" fill="url(#p6)" />
<path d="M24 61v11.500l2.800-2.600l2.200 4.800l1.900-.9l-2.200-4.600h3.800z" fill="#454545" shape-rendering="auto"/>
<rect x="55" y="61" width="1" height="6" fill="url(#p40)" />
<rect x="55" y="70" width="1" height="6" fill="url(#p40)" />
<rect x="48" y="68" width="6" height="1" fill="url(#p40)" />
<rect x="57" y="68" width="6" height="1" fill="url(#p40)" />
<rect x="72" y="57" width="1" height="21" fill="url(#p34)" />
<rect x="73" y="57" width="1" height="21" fill="url(#p6)" />
<rect x="89" y="62" width="1" height="13" fill="url(#p40)" />
<rect x="112" y="68" width="13" height="1" fill="url(#p40)" />
<g shape-rendering="auto" stroke="#4A4A4A" fill="none"><line x1="140" y1="75" x2="152.500" y2="62.500" stroke-width="1.300"/><path d="M166 71l11-8M168 75l11-8M168 72l2-5l2 3l2-5l2 3l2-5" stroke-width="1"/></g>
<text x="177" y="77" fill="#4A4A4A" font-size="7" text-anchor="start" xml:space="preserve" font-weight="bold">E</text>
<line x1="194" y1="62.5" x2="208" y2="62.5" stroke="#4A4A4A" stroke-dasharray="1 1"/>
<line x1="194" y1="65.5" x2="208" y2="65.5" stroke="#4A4A4A" stroke-dasharray="1 1"/>
<line x1="194" y1="68.5" x2="208" y2="68.5" stroke="#4A4A4A" stroke-dasharray="1 1"/>
<line x1="194" y1="72.5" x2="208" y2="72.5" stroke="#4A4A4A" stroke-dasharray="1 1"/>
<text x="206" y="77" fill="#4A4A4A" font-size="7" text-anchor="start" xml:space="preserve" font-weight="bold">F</text>
<text x="225.5" y="73.5" fill="#555" font-size="12" text-anchor="start" xml:space="preserve" font-weight="bold">A</text>
<rect x="252.500" y="62.500" width="11" height="13" fill="none" stroke="#4A4A4A" stroke-dasharray="1 1"/>
<text x="254.3" y="73.5" fill="#555" font-size="11" text-anchor="start" xml:space="preserve" font-weight="bold" font-family="Liberation Serif, serif">T</text>
<g shape-rendering="auto" fill="#4A4A4A"><path d="M282.500 62l3 3l-3 3l-3-3zM289.500 69l3 3l-3 3l-3-3z"/><path d="M281 70l2.500 2.500l6.500-7.500" stroke="#4A4A4A" fill="none" stroke-width="1.300"/></g>
<path d="M298 67h5l-2.5 3z" fill="#000" shape-rendering="auto"/>
<rect x="309" y="57" width="1" height="21" fill="url(#p34)" />
<rect x="310" y="57" width="1" height="21" fill="url(#p6)" />
<rect x="313" y="57" width="1" height="21" fill="url(#p34)" />
<rect x="314" y="57" width="1" height="21" fill="url(#p6)" />
<rect x="318" y="57" width="3" height="1" fill="url(#p30)" />
<rect x="318" y="58" width="3" height="1" fill="url(#p31)" />
<rect x="318" y="59" width="3" height="1" fill="url(#p30)" />
<rect x="318" y="60" width="3" height="1" fill="url(#p31)" />
<rect x="318" y="61" width="3" height="1" fill="url(#p30)" />
<rect x="318" y="62" width="3" height="1" fill="url(#p31)" />
<rect x="318" y="63" width="3" height="1" fill="url(#p30)" />
<rect x="318" y="64" width="3" height="1" fill="url(#p31)" />
<rect x="318" y="65" width="3" height="1" fill="url(#p30)" />
<rect x="318" y="66" width="3" height="1" fill="url(#p31)" />
<rect x="318" y="67" width="3" height="1" fill="url(#p30)" />
<rect x="318" y="68" width="3" height="1" fill="url(#p31)" />
<rect x="318" y="69" width="3" height="1" fill="url(#p30)" />
<rect x="318" y="70" width="3" height="1" fill="url(#p31)" />
<rect x="318" y="71" width="3" height="1" fill="url(#p30)" />
<rect x="318" y="72" width="3" height="1" fill="url(#p31)" />
<rect x="318" y="73" width="3" height="1" fill="url(#p30)" />
<rect x="318" y="74" width="3" height="1" fill="url(#p31)" />
<rect x="318" y="75" width="3" height="1" fill="url(#p30)" />
<rect x="318" y="76" width="3" height="1" fill="url(#p31)" />
<rect x="318" y="77" width="3" height="1" fill="url(#p30)" />
<rect x="318" y="78" width="3" height="1" fill="url(#p31)" />
<rect x="324" y="56" width="26" height="23" fill="url(#pp)" />
<rect x="324" y="56" width="26" height="1" fill="url(#p36)" />
<rect x="324" y="56" width="1" height="23" fill="url(#p36)" />
<rect x="324" y="78" width="26" height="1" fill="url(#p6)" />
<rect x="349" y="56" width="1" height="23" fill="url(#p6)" />
<text x="330" y="72" fill="#222" font-size="10.5" text-anchor="start" xml:space="preserve" textLength="12.5" lengthAdjust="spacingAndGlyphs">M1</text>
<text x="357" y="72" fill="#222" font-size="10.5" text-anchor="start" xml:space="preserve" textLength="13" lengthAdjust="spacingAndGlyphs">M5</text>
<text x="383" y="72" fill="#222" font-size="10.5" text-anchor="start" xml:space="preserve" textLength="18.5" lengthAdjust="spacingAndGlyphs">M15</text>
<text x="411" y="72" fill="#222" font-size="10.5" text-anchor="start" xml:space="preserve" textLength="18.5" lengthAdjust="spacingAndGlyphs">M30</text>
<text x="442" y="72" fill="#222" font-size="10.5" text-anchor="start" xml:space="preserve" textLength="12.5" lengthAdjust="spacingAndGlyphs">H1</text>
<text x="469" y="72" fill="#222" font-size="10.5" text-anchor="start" xml:space="preserve" textLength="13" lengthAdjust="spacingAndGlyphs">H4</text>
<text x="499" y="72" fill="#222" font-size="10.5" text-anchor="start" xml:space="preserve" textLength="12.5" lengthAdjust="spacingAndGlyphs">D1</text>
<text x="526" y="72" fill="#222" font-size="10.5" text-anchor="start" xml:space="preserve" textLength="14.5" lengthAdjust="spacingAndGlyphs">W1</text>
<text x="553" y="72" fill="#222" font-size="10.5" text-anchor="start" xml:space="preserve" textLength="14.5" lengthAdjust="spacingAndGlyphs">MN</text>
<rect x="575" y="55" width="1" height="25" fill="url(#p34)" />
<rect x="576" y="55" width="1" height="25" fill="url(#p6)" />
<rect x="7" y="80" width="792" height="1" fill="url(#p4)" />
<rect x="8" y="81" width="790" height="1" fill="url(#p5)" />
<rect x="7" y="80" width="1" height="356" fill="url(#p4)" />
<rect x="8" y="81" width="1" height="354" fill="url(#p5)" />
<rect x="9" y="82" width="788" height="352" fill="#000" />
<rect x="797" y="82" width="1" height="352" fill="url(#p45)" />
<rect x="798" y="81" width="1" height="354" fill="url(#p6)" />
<path d="M611 85h8l-4 4z" fill="#4A4A4A" shape-rendering="auto"/>
<rect x="11.5" y="84.5" width="746" height="318" fill="none" stroke="#B4B4B4"/>
<rect x="11.5" y="404.5" width="746" height="12" fill="none" stroke="#B4B4B4"/>
<rect x="758" y="112" width="2" height="1" fill="url(#p46)" />
<text x="763.5" y="115" fill="#B4B4B4" font-size="10" text-anchor="start" xml:space="preserve" textLength="26.5" lengthAdjust="spacingAndGlyphs">1.3035</text>
<rect x="758" y="165" width="2" height="1" fill="url(#p46)" />
<text x="763.5" y="168" fill="#B4B4B4" font-size="10" text-anchor="start" xml:space="preserve" textLength="26.5" lengthAdjust="spacingAndGlyphs">1.3025</text>
<rect x="758" y="217" width="2" height="1" fill="url(#p46)" />
<text x="763.5" y="220" fill="#B4B4B4" font-size="10" text-anchor="start" xml:space="preserve" textLength="26.5" lengthAdjust="spacingAndGlyphs">1.3015</text>
<rect x="758" y="270" width="2" height="1" fill="url(#p46)" />
<text x="763.5" y="273" fill="#B4B4B4" font-size="10" text-anchor="start" xml:space="preserve" textLength="26.5" lengthAdjust="spacingAndGlyphs">1.3005</text>
<rect x="758" y="323" width="2" height="1" fill="url(#p46)" />
<text x="763.5" y="326" fill="#B4B4B4" font-size="10" text-anchor="start" xml:space="preserve" textLength="26.5" lengthAdjust="spacingAndGlyphs">1.2995</text>
<rect x="758" y="375" width="2" height="1" fill="url(#p46)" />
<text x="763.5" y="378" fill="#B4B4B4" font-size="10" text-anchor="start" xml:space="preserve" textLength="26.5" lengthAdjust="spacingAndGlyphs">1.2985</text>
<rect x="12" y="417" width="1" height="3" fill="url(#p46)" />
<text x="11.5" y="429" fill="#B4B4B4" font-size="10" text-anchor="start" xml:space="preserve" textLength="49" lengthAdjust="spacingAndGlyphs">22 Apr 2009</text>
<rect x="76" y="417" width="1" height="3" fill="url(#p46)" />
<text x="75.5" y="429" fill="#B4B4B4" font-size="10" text-anchor="start" xml:space="preserve" textLength="52" lengthAdjust="spacingAndGlyphs">22 Apr 16:20</text>
<rect x="140" y="417" width="1" height="3" fill="url(#p46)" />
<text x="139.5" y="429" fill="#B4B4B4" font-size="10" text-anchor="start" xml:space="preserve" textLength="52" lengthAdjust="spacingAndGlyphs">22 Apr 16:36</text>
<rect x="204" y="417" width="1" height="3" fill="url(#p46)" />
<text x="203.5" y="429" fill="#B4B4B4" font-size="10" text-anchor="start" xml:space="preserve" textLength="52" lengthAdjust="spacingAndGlyphs">22 Apr 16:52</text>
<rect x="268" y="417" width="1" height="3" fill="url(#p46)" />
<text x="267.5" y="429" fill="#B4B4B4" font-size="10" text-anchor="start" xml:space="preserve" textLength="52" lengthAdjust="spacingAndGlyphs">22 Apr 17:08</text>
<rect x="332" y="417" width="1" height="3" fill="url(#p46)" />
<text x="331.5" y="429" fill="#B4B4B4" font-size="10" text-anchor="start" xml:space="preserve" textLength="52" lengthAdjust="spacingAndGlyphs">22 Apr 17:24</text>
<rect x="396" y="417" width="1" height="3" fill="url(#p46)" />
<text x="395.5" y="429" fill="#B4B4B4" font-size="10" text-anchor="start" xml:space="preserve" textLength="52" lengthAdjust="spacingAndGlyphs">22 Apr 17:40</text>
<rect x="460" y="417" width="1" height="3" fill="url(#p46)" />
<text x="459.5" y="429" fill="#B4B4B4" font-size="10" text-anchor="start" xml:space="preserve" textLength="52" lengthAdjust="spacingAndGlyphs">22 Apr 17:56</text>
<rect x="524" y="417" width="1" height="3" fill="url(#p46)" />
<text x="523.5" y="429" fill="#B4B4B4" font-size="10" text-anchor="start" xml:space="preserve" textLength="52" lengthAdjust="spacingAndGlyphs">22 Apr 18:12</text>
<rect x="588" y="417" width="1" height="3" fill="url(#p46)" />
<text x="587.5" y="429" fill="#B4B4B4" font-size="10" text-anchor="start" xml:space="preserve" textLength="52" lengthAdjust="spacingAndGlyphs">22 Apr 18:28</text>
<text x="16" y="96" fill="#B4B4B4" font-size="10" text-anchor="start" xml:space="preserve" textLength="181.5" lengthAdjust="spacingAndGlyphs">EURUSD,M1  1.2993 1.2993 1.2993 1.2993</text>
<text x="762" y="415" fill="#B4B4B4" font-size="10" text-anchor="start" xml:space="preserve" textLength="9.5" lengthAdjust="spacingAndGlyphs">93</text>
<line x1="13" y1="154.5" x2="752" y2="154.5" stroke="#32CD32" stroke-dasharray="9 6 3 6"/>
<line x1="13" y1="254.5" x2="752" y2="254.5" stroke="#FF0000" stroke-dasharray="9 6 3 6"/>
<line x1="12" y1="333.5" x2="757" y2="333.5" stroke="#5A5A5A" stroke-dasharray="1 1"/>
<text x="17" y="152" fill="#B4B4B4" font-size="10" text-anchor="start" xml:space="preserve" textLength="62" lengthAdjust="spacingAndGlyphs">#140675_9 sell</text>
<rect x="12" y="180" width="1" height="54" fill="url(#p47)" />
<rect x="11" y="190" width="3" height="44" fill="url(#p47)" />
<rect x="16" y="207" width="1" height="32" fill="url(#p47)" />
<rect x="15" y="222" width="3" height="17" fill="url(#p47)" />
<rect x="20" y="211" width="1" height="28" fill="url(#p48)" />
<rect x="19" y="215" width="3" height="20" fill="url(#p48)" />
<rect x="24" y="201" width="1" height="28" fill="url(#p47)" />
<rect x="23" y="217" width="3" height="7" fill="url(#p47)" />
<rect x="28" y="222" width="1" height="29" fill="url(#p47)" />
<rect x="27" y="228" width="3" height="7" fill="url(#p47)" />
<rect x="32" y="238" width="1" height="18" fill="url(#p47)" />
<rect x="31" y="238" width="3" height="18" fill="url(#p47)" />
<rect x="36" y="222" width="1" height="45" fill="url(#p48)" />
<rect x="35" y="232" width="3" height="14" fill="url(#p48)" />
<rect x="40" y="232" width="1" height="24" fill="url(#p47)" />
<rect x="39" y="238" width="3" height="18" fill="url(#p47)" />
<rect x="44" y="228" width="1" height="28" fill="url(#p47)" />
<rect x="43" y="238" width="3" height="18" fill="url(#p47)" />
<rect x="48" y="233" width="1" height="28" fill="url(#p49)" />
<rect x="47" y="259" width="3" height="1" fill="url(#p49)" />
<rect x="52" y="217" width="1" height="43" fill="url(#p48)" />
<rect x="51" y="217" width="3" height="39" fill="url(#p48)" />
<rect x="56" y="138" width="1" height="75" fill="url(#p48)" />
<rect x="55" y="143" width="3" height="70" fill="url(#p48)" />
<rect x="60" y="149" width="1" height="28" fill="url(#p47)" />
<rect x="59" y="149" width="3" height="12" fill="url(#p47)" />
<rect x="64" y="165" width="1" height="17" fill="url(#p49)" />
<rect x="63" y="165" width="3" height="1" fill="url(#p49)" />
<rect x="68" y="149" width="1" height="23" fill="url(#p48)" />
<rect x="67" y="159" width="3" height="13" fill="url(#p48)" />
<rect x="72" y="154" width="1" height="39" fill="url(#p47)" />
<rect x="71" y="159" width="3" height="18" fill="url(#p47)" />
<rect x="76" y="154" width="1" height="28" fill="url(#p48)" />
<rect x="75" y="168" width="3" height="14" fill="url(#p48)" />
<rect x="80" y="133" width="1" height="28" fill="url(#p48)" />
<rect x="79" y="138" width="3" height="23" fill="url(#p48)" />
<rect x="84" y="133" width="1" height="44" fill="url(#p47)" />
<rect x="83" y="133" width="3" height="44" fill="url(#p47)" />
<rect x="88" y="159" width="1" height="18" fill="url(#p48)" />
<rect x="87" y="164" width="3" height="8" fill="url(#p48)" />
<rect x="92" y="154" width="1" height="34" fill="url(#p49)" />
<rect x="91" y="170" width="3" height="1" fill="url(#p49)" />
<rect x="96" y="122" width="1" height="60" fill="url(#p48)" />
<rect x="95" y="142" width="3" height="37" fill="url(#p48)" />
<rect x="100" y="133" width="1" height="38" fill="url(#p47)" />
<rect x="99" y="138" width="3" height="24" fill="url(#p47)" />
<rect x="104" y="154" width="1" height="18" fill="url(#p47)" />
<rect x="103" y="154" width="3" height="18" fill="url(#p47)" />
<rect x="108" y="143" width="1" height="45" fill="url(#p47)" />
<rect x="107" y="164" width="3" height="8" fill="url(#p47)" />
<rect x="112" y="138" width="1" height="29" fill="url(#p48)" />
<rect x="111" y="154" width="3" height="13" fill="url(#p48)" />
<rect x="116" y="132" width="1" height="40" fill="url(#p49)" />
<rect x="115" y="155" width="3" height="1" fill="url(#p49)" />
<rect x="120" y="170" width="1" height="33" fill="url(#p47)" />
<rect x="119" y="170" width="3" height="23" fill="url(#p47)" />
<rect x="124" y="180" width="1" height="18" fill="url(#p48)" />
<rect x="123" y="180" width="3" height="18" fill="url(#p48)" />
<rect x="128" y="175" width="1" height="38" fill="url(#p47)" />
<rect x="127" y="175" width="3" height="38" fill="url(#p47)" />
<rect x="132" y="207" width="1" height="16" fill="url(#p49)" />
<rect x="131" y="217" width="3" height="1" fill="url(#p49)" />
<rect x="136" y="180" width="1" height="43" fill="url(#p48)" />
<rect x="135" y="196" width="3" height="27" fill="url(#p48)" />
<rect x="140" y="191" width="1" height="18" fill="url(#p48)" />
<rect x="139" y="196" width="3" height="8" fill="url(#p48)" />
<rect x="144" y="191" width="1" height="28" fill="url(#p47)" />
<rect x="143" y="196" width="3" height="13" fill="url(#p47)" />
<rect x="148" y="196" width="1" height="13" fill="url(#p49)" />
<rect x="152" y="175" width="1" height="23" fill="url(#p49)" />
<rect x="151" y="196" width="3" height="1" fill="url(#p49)" />
<rect x="156" y="185" width="1" height="28" fill="url(#p48)" />
<rect x="155" y="191" width="3" height="12" fill="url(#p48)" />
<rect x="160" y="175" width="1" height="17" fill="url(#p48)" />
<rect x="159" y="180" width="3" height="8" fill="url(#p48)" />
<rect x="164" y="175" width="1" height="14" fill="url(#p49)" />
<rect x="163" y="187" width="3" height="1" fill="url(#p49)" />
<rect x="168" y="175" width="1" height="23" fill="url(#p47)" />
<rect x="167" y="191" width="3" height="7" fill="url(#p47)" />
<rect x="172" y="186" width="1" height="38" fill="url(#p47)" />
<rect x="171" y="201" width="3" height="18" fill="url(#p47)" />
<rect x="176" y="212" width="1" height="12" fill="url(#p47)" />
<rect x="175" y="212" width="3" height="7" fill="url(#p47)" />
<rect x="180" y="196" width="1" height="28" fill="url(#p48)" />
<rect x="179" y="207" width="3" height="7" fill="url(#p48)" />
<rect x="184" y="212" width="1" height="23" fill="url(#p47)" />
<rect x="183" y="212" width="3" height="13" fill="url(#p47)" />
<rect x="188" y="222" width="1" height="18" fill="url(#p47)" />
<rect x="187" y="228" width="3" height="7" fill="url(#p47)" />
<rect x="192" y="222" width="1" height="18" fill="url(#p48)" />
<rect x="191" y="232" width="3" height="8" fill="url(#p48)" />
<rect x="196" y="222" width="1" height="13" fill="url(#p48)" />
<rect x="195" y="222" width="3" height="7" fill="url(#p48)" />
<rect x="200" y="217" width="1" height="12" fill="url(#p48)" />
<rect x="199" y="222" width="3" height="7" fill="url(#p48)" />
<rect x="204" y="180" width="1" height="44" fill="url(#p48)" />
<rect x="203" y="190" width="3" height="34" fill="url(#p48)" />
<rect x="208" y="180" width="1" height="13" fill="url(#p47)" />
<rect x="207" y="186" width="3" height="7" fill="url(#p47)" />
<rect x="212" y="186" width="1" height="38" fill="url(#p47)" />
<rect x="211" y="186" width="3" height="28" fill="url(#p47)" />
<rect x="216" y="196" width="1" height="28" fill="url(#p48)" />
<rect x="215" y="199" width="3" height="20" fill="url(#p48)" />
<rect x="220" y="192" width="1" height="27" fill="url(#p47)" />
<rect x="219" y="196" width="3" height="13" fill="url(#p47)" />
<rect x="224" y="192" width="1" height="27" fill="url(#p47)" />
<rect x="223" y="192" width="3" height="22" fill="url(#p47)" />
<rect x="228" y="201" width="1" height="18" fill="url(#p49)" />
<rect x="227" y="218" width="3" height="1" fill="url(#p49)" />
<rect x="232" y="212" width="1" height="34" fill="url(#p49)" />
<rect x="231" y="222" width="3" height="1" fill="url(#p49)" />
<rect x="236" y="228" width="1" height="81" fill="url(#p47)" />
<rect x="235" y="228" width="3" height="60" fill="url(#p47)" />
<rect x="240" y="275" width="1" height="28" fill="url(#p47)" />
<rect x="239" y="291" width="3" height="8" fill="url(#p47)" />
<rect x="244" y="280" width="1" height="23" fill="url(#p48)" />
<rect x="243" y="286" width="3" height="17" fill="url(#p48)" />
<rect x="248" y="286" width="1" height="37" fill="url(#p47)" />
<rect x="247" y="286" width="3" height="12" fill="url(#p47)" />
<rect x="252" y="289" width="1" height="14" fill="url(#p48)" />
<rect x="251" y="291" width="3" height="7" fill="url(#p48)" />
<rect x="256" y="286" width="1" height="17" fill="url(#p47)" />
<rect x="255" y="286" width="3" height="7" fill="url(#p47)" />
<rect x="260" y="265" width="1" height="33" fill="url(#p48)" />
<rect x="259" y="270" width="3" height="28" fill="url(#p48)" />
<rect x="264" y="254" width="1" height="13" fill="url(#p48)" />
<rect x="263" y="254" width="3" height="13" fill="url(#p48)" />
<rect x="268" y="244" width="1" height="18" fill="url(#p48)" />
<rect x="267" y="248" width="3" height="14" fill="url(#p48)" />
<rect x="272" y="222" width="1" height="40" fill="url(#p47)" />
<rect x="271" y="243" width="3" height="19" fill="url(#p47)" />
<rect x="276" y="244" width="1" height="23" fill="url(#p48)" />
<rect x="275" y="244" width="3" height="14" fill="url(#p48)" />
<rect x="280" y="249" width="1" height="33" fill="url(#p47)" />
<rect x="279" y="249" width="3" height="33" fill="url(#p47)" />
<rect x="284" y="265" width="1" height="23" fill="url(#p48)" />
<rect x="283" y="265" width="3" height="23" fill="url(#p48)" />
<rect x="288" y="265" width="1" height="17" fill="url(#p48)" />
<rect x="287" y="265" width="3" height="11" fill="url(#p48)" />
<rect x="292" y="254" width="1" height="22" fill="url(#p48)" />
<rect x="291" y="254" width="3" height="18" fill="url(#p48)" />
<rect x="296" y="238" width="1" height="34" fill="url(#p48)" />
<rect x="295" y="244" width="3" height="8" fill="url(#p48)" />
<rect x="300" y="222" width="1" height="24" fill="url(#p47)" />
<rect x="299" y="238" width="3" height="8" fill="url(#p47)" />
<rect x="304" y="228" width="1" height="39" fill="url(#p48)" />
<rect x="303" y="228" width="3" height="23" fill="url(#p48)" />
<rect x="308" y="222" width="1" height="23" fill="url(#p48)" />
<rect x="307" y="228" width="3" height="8" fill="url(#p48)" />
<rect x="312" y="228" width="1" height="8" fill="url(#p48)" />
<rect x="311" y="228" width="3" height="8" fill="url(#p48)" />
<rect x="316" y="222" width="1" height="17" fill="url(#p48)" />
<rect x="315" y="222" width="3" height="17" fill="url(#p48)" />
<rect x="320" y="217" width="1" height="18" fill="url(#p47)" />
<rect x="319" y="217" width="3" height="18" fill="url(#p47)" />
<rect x="324" y="233" width="1" height="12" fill="url(#p49)" />
<rect x="323" y="244" width="3" height="1" fill="url(#p49)" />
<rect x="328" y="238" width="1" height="13" fill="url(#p48)" />
<rect x="327" y="238" width="3" height="13" fill="url(#p48)" />
<rect x="332" y="217" width="1" height="43" fill="url(#p48)" />
<rect x="331" y="217" width="3" height="34" fill="url(#p48)" />
<rect x="336" y="196" width="1" height="17" fill="url(#p48)" />
<rect x="335" y="200" width="3" height="13" fill="url(#p48)" />
<rect x="340" y="186" width="1" height="12" fill="url(#p49)" />
<rect x="339" y="196" width="3" height="1" fill="url(#p49)" />
<rect x="344" y="201" width="1" height="7" fill="url(#p49)" />
<rect x="343" y="201" width="3" height="1" fill="url(#p49)" />
<rect x="348" y="207" width="1" height="12" fill="url(#p48)" />
<rect x="347" y="207" width="3" height="6" fill="url(#p48)" />
<rect x="352" y="196" width="1" height="17" fill="url(#p48)" />
<rect x="351" y="196" width="3" height="17" fill="url(#p48)" />
<rect x="356" y="186" width="1" height="17" fill="url(#p48)" />
<rect x="355" y="191" width="3" height="12" fill="url(#p48)" />
<rect x="360" y="180" width="1" height="33" fill="url(#p48)" />
<rect x="359" y="180" width="3" height="23" fill="url(#p48)" />
<rect x="364" y="186" width="1" height="23" fill="url(#p47)" />
<rect x="363" y="186" width="3" height="12" fill="url(#p47)" />
<rect x="368" y="186" width="1" height="12" fill="url(#p48)" />
<rect x="367" y="186" width="3" height="12" fill="url(#p48)" />
<rect x="372" y="175" width="1" height="13" fill="url(#p49)" />
<rect x="371" y="180" width="3" height="1" fill="url(#p49)" />
<rect x="376" y="186" width="1" height="17" fill="url(#p47)" />
<rect x="375" y="187" width="3" height="6" fill="url(#p47)" />
<rect x="380" y="186" width="1" height="17" fill="url(#p47)" />
<rect x="379" y="196" width="3" height="7" fill="url(#p47)" />
<rect x="384" y="201" width="1" height="12" fill="url(#p49)" />
<rect x="383" y="207" width="3" height="1" fill="url(#p49)" />
<rect x="388" y="212" width="1" height="11" fill="url(#p47)" />
<rect x="387" y="212" width="3" height="7" fill="url(#p47)" />
<rect x="392" y="197" width="1" height="16" fill="url(#p48)" />
<rect x="391" y="202" width="3" height="11" fill="url(#p48)" />
<rect x="396" y="180" width="1" height="23" fill="url(#p48)" />
<rect x="395" y="186" width="3" height="17" fill="url(#p48)" />
<rect x="400" y="165" width="1" height="24" fill="url(#p49)" />
<rect x="399" y="180" width="3" height="1" fill="url(#p49)" />
<rect x="404" y="107" width="1" height="65" fill="url(#p48)" />
<rect x="403" y="154" width="3" height="18" fill="url(#p48)" />
<rect x="408" y="133" width="1" height="17" fill="url(#p48)" />
<rect x="407" y="138" width="3" height="12" fill="url(#p48)" />
<rect x="412" y="128" width="1" height="16" fill="url(#p48)" />
<rect x="411" y="133" width="3" height="11" fill="url(#p48)" />
<rect x="416" y="133" width="1" height="18" fill="url(#p47)" />
<rect x="415" y="138" width="3" height="13" fill="url(#p47)" />
<rect x="420" y="138" width="1" height="29" fill="url(#p48)" />
<rect x="419" y="143" width="3" height="18" fill="url(#p48)" />
<rect x="424" y="138" width="1" height="13" fill="url(#p47)" />
<rect x="423" y="138" width="3" height="13" fill="url(#p47)" />
<rect x="428" y="154" width="1" height="23" fill="url(#p47)" />
<rect x="427" y="154" width="3" height="18" fill="url(#p47)" />
<rect x="432" y="165" width="1" height="23" fill="url(#p47)" />
<rect x="431" y="165" width="3" height="12" fill="url(#p47)" />
<rect x="436" y="170" width="1" height="28" fill="url(#p47)" />
<rect x="435" y="170" width="3" height="23" fill="url(#p47)" />
<rect x="440" y="196" width="1" height="13" fill="url(#p47)" />
<rect x="439" y="196" width="3" height="13" fill="url(#p47)" />
<rect x="444" y="202" width="1" height="49" fill="url(#p47)" />
<rect x="443" y="202" width="3" height="44" fill="url(#p47)" />
<rect x="448" y="228" width="1" height="12" fill="url(#p48)" />
<rect x="447" y="228" width="3" height="12" fill="url(#p48)" />
<rect x="452" y="222" width="1" height="18" fill="url(#p48)" />
<rect x="451" y="232" width="3" height="8" fill="url(#p48)" />
<rect x="456" y="222" width="1" height="34" fill="url(#p47)" />
<rect x="455" y="228" width="3" height="28" fill="url(#p47)" />
<rect x="460" y="238" width="1" height="22" fill="url(#p48)" />
<rect x="459" y="238" width="3" height="14" fill="url(#p48)" />
<rect x="464" y="222" width="1" height="23" fill="url(#p47)" />
<rect x="463" y="232" width="3" height="8" fill="url(#p47)" />
<rect x="468" y="238" width="1" height="13" fill="url(#p47)" />
<rect x="467" y="243" width="3" height="8" fill="url(#p47)" />
<rect x="472" y="238" width="1" height="18" fill="url(#p48)" />
<rect x="471" y="238" width="3" height="18" fill="url(#p48)" />
<rect x="476" y="232" width="1" height="19" fill="url(#p49)" />
<rect x="475" y="244" width="3" height="1" fill="url(#p49)" />
<rect x="480" y="238" width="1" height="13" fill="url(#p47)" />
<rect x="479" y="238" width="3" height="13" fill="url(#p47)" />
<rect x="484" y="238" width="1" height="18" fill="url(#p49)" />
<rect x="483" y="249" width="3" height="1" fill="url(#p49)" />
<rect x="488" y="258" width="1" height="24" fill="url(#p47)" />
<rect x="487" y="258" width="3" height="14" fill="url(#p47)" />
<rect x="492" y="265" width="1" height="17" fill="url(#p47)" />
<rect x="491" y="265" width="3" height="17" fill="url(#p47)" />
<rect x="496" y="270" width="1" height="22" fill="url(#p48)" />
<rect x="495" y="270" width="3" height="22" fill="url(#p48)" />
<rect x="500" y="259" width="1" height="23" fill="url(#p47)" />
<rect x="499" y="265" width="3" height="17" fill="url(#p47)" />
<rect x="504" y="270" width="1" height="18" fill="url(#p47)" />
<rect x="503" y="275" width="3" height="13" fill="url(#p47)" />
<rect x="508" y="265" width="1" height="12" fill="url(#p48)" />
<rect x="507" y="270" width="3" height="7" fill="url(#p48)" />
<rect x="512" y="254" width="1" height="14" fill="url(#p48)" />
<rect x="511" y="259" width="3" height="9" fill="url(#p48)" />
<rect x="516" y="244" width="1" height="17" fill="url(#p48)" />
<rect x="515" y="249" width="3" height="8" fill="url(#p48)" />
<rect x="520" y="249" width="1" height="18" fill="url(#p47)" />
<rect x="519" y="254" width="3" height="7" fill="url(#p47)" />
<rect x="524" y="249" width="1" height="18" fill="url(#p47)" />
<rect x="523" y="249" width="3" height="18" fill="url(#p47)" />
<rect x="528" y="265" width="1" height="7" fill="url(#p48)" />
<rect x="527" y="265" width="3" height="7" fill="url(#p48)" />
<rect x="532" y="254" width="1" height="18" fill="url(#p48)" />
<rect x="531" y="254" width="3" height="18" fill="url(#p48)" />
<rect x="536" y="249" width="1" height="7" fill="url(#p49)" />
<rect x="535" y="249" width="3" height="1" fill="url(#p49)" />
<rect x="540" y="249" width="1" height="12" fill="url(#p48)" />
<rect x="539" y="249" width="3" height="12" fill="url(#p48)" />
<rect x="544" y="244" width="1" height="17" fill="url(#p48)" />
<rect x="543" y="249" width="3" height="12" fill="url(#p48)" />
<rect x="548" y="249" width="1" height="28" fill="url(#p47)" />
<rect x="547" y="254" width="3" height="23" fill="url(#p47)" />
<rect x="552" y="280" width="1" height="8" fill="url(#p49)" />
<rect x="551" y="280" width="3" height="1" fill="url(#p49)" />
<rect x="556" y="265" width="1" height="12" fill="url(#p48)" />
<rect x="555" y="265" width="3" height="12" fill="url(#p48)" />
<rect x="560" y="265" width="1" height="28" fill="url(#p47)" />
<rect x="559" y="265" width="3" height="17" fill="url(#p47)" />
<rect x="564" y="275" width="1" height="18" fill="url(#p47)" />
<rect x="563" y="275" width="3" height="7" fill="url(#p47)" />
<rect x="568" y="259" width="1" height="23" fill="url(#p48)" />
<rect x="567" y="259" width="3" height="13" fill="url(#p48)" />
<rect x="572" y="254" width="1" height="12" fill="url(#p48)" />
<rect x="571" y="259" width="3" height="7" fill="url(#p48)" />
<rect x="576" y="265" width="1" height="12" fill="url(#p47)" />
<rect x="575" y="265" width="3" height="12" fill="url(#p47)" />
<rect x="580" y="280" width="1" height="13" fill="url(#p47)" />
<rect x="579" y="280" width="3" height="13" fill="url(#p47)" />
<rect x="584" y="286" width="1" height="7" fill="url(#p47)" />
<rect x="583" y="286" width="3" height="7" fill="url(#p47)" />
<rect x="588" y="296" width="1" height="50" fill="url(#p47)" />
<rect x="587" y="296" width="3" height="38" fill="url(#p47)" />
<rect x="592" y="322" width="1" height="13" fill="url(#p47)" />
<rect x="591" y="328" width="3" height="7" fill="url(#p47)" />
<rect x="596" y="333" width="1" height="13" fill="url(#p48)" />
<rect x="595" y="333" width="3" height="7" fill="url(#p48)" />
<rect x="600" y="328" width="1" height="6" fill="url(#p49)" />
<rect x="599" y="328" width="3" height="1" fill="url(#p49)" />
<rect x="604" y="317" width="1" height="23" fill="url(#p48)" />
<rect x="603" y="328" width="3" height="7" fill="url(#p48)" />
<rect x="607" y="333" width="4" height="1" fill="url(#p49)" />
<text x="14" y="416" fill="#9A9A9A" font-size="9" text-anchor="start" xml:space="preserve" textLength="36" lengthAdjust="spacingAndGlyphs">Volumes</text>
<rect x="12" y="411" width="1" height="5" fill="url(#p47)" />
<rect x="16" y="413" width="1" height="3" fill="url(#p47)" />
<rect x="20" y="411" width="1" height="5" fill="url(#p50)" />
<rect x="24" y="409" width="1" height="7" fill="url(#p47)" />
<rect x="28" y="414" width="1" height="2" fill="url(#p47)" />
<rect x="32" y="413" width="1" height="3" fill="url(#p47)" />
<rect x="36" y="407" width="1" height="9" fill="url(#p50)" />
<rect x="40" y="410" width="1" height="6" fill="url(#p47)" />
<rect x="44" y="413" width="1" height="3" fill="url(#p47)" />
<rect x="48" y="411" width="1" height="5" fill="url(#p50)" />
<rect x="52" y="409" width="1" height="7" fill="url(#p50)" />
<rect x="56" y="414" width="1" height="2" fill="url(#p50)" />
<rect x="60" y="410" width="1" height="6" fill="url(#p47)" />
<rect x="64" y="412" width="1" height="4" fill="url(#p50)" />
<rect x="68" y="414" width="1" height="2" fill="url(#p50)" />
<rect x="72" y="413" width="1" height="3" fill="url(#p47)" />
<rect x="76" y="411" width="1" height="5" fill="url(#p50)" />
<rect x="80" y="411" width="1" height="5" fill="url(#p50)" />
<rect x="84" y="413" width="1" height="3" fill="url(#p47)" />
<rect x="88" y="412" width="1" height="4" fill="url(#p50)" />
<rect x="92" y="413" width="1" height="3" fill="url(#p50)" />
<rect x="96" y="410" width="1" height="6" fill="url(#p50)" />
<rect x="100" y="411" width="1" height="5" fill="url(#p47)" />
<rect x="104" y="414" width="1" height="2" fill="url(#p47)" />
<rect x="108" y="407" width="1" height="9" fill="url(#p47)" />
<rect x="112" y="409" width="1" height="7" fill="url(#p50)" />
<rect x="116" y="413" width="1" height="3" fill="url(#p50)" />
<rect x="120" y="412" width="1" height="4" fill="url(#p47)" />
<rect x="124" y="409" width="1" height="7" fill="url(#p50)" />
<rect x="128" y="409" width="1" height="7" fill="url(#p47)" />
<rect x="132" y="409" width="1" height="7" fill="url(#p50)" />
<rect x="136" y="414" width="1" height="2" fill="url(#p50)" />
<rect x="140" y="409" width="1" height="7" fill="url(#p50)" />
<rect x="144" y="409" width="1" height="7" fill="url(#p47)" />
<rect x="148" y="411" width="1" height="5" fill="url(#p50)" />
<rect x="152" y="414" width="1" height="2" fill="url(#p50)" />
<rect x="156" y="412" width="1" height="4" fill="url(#p50)" />
<rect x="160" y="414" width="1" height="2" fill="url(#p50)" />
<rect x="164" y="410" width="1" height="6" fill="url(#p50)" />
<rect x="168" y="407" width="1" height="9" fill="url(#p47)" />
<rect x="172" y="413" width="1" height="3" fill="url(#p47)" />
<rect x="176" y="412" width="1" height="4" fill="url(#p47)" />
<rect x="180" y="411" width="1" height="5" fill="url(#p50)" />
<rect x="184" y="413" width="1" height="3" fill="url(#p47)" />
<rect x="188" y="410" width="1" height="6" fill="url(#p47)" />
<rect x="192" y="413" width="1" height="3" fill="url(#p50)" />
<rect x="196" y="409" width="1" height="7" fill="url(#p50)" />
<rect x="200" y="412" width="1" height="4" fill="url(#p50)" />
<rect x="204" y="410" width="1" height="6" fill="url(#p50)" />
<rect x="208" y="407" width="1" height="9" fill="url(#p47)" />
<rect x="212" y="409" width="1" height="7" fill="url(#p47)" />
<rect x="216" y="413" width="1" height="3" fill="url(#p50)" />
<rect x="220" y="413" width="1" height="3" fill="url(#p47)" />
<rect x="224" y="409" width="1" height="7" fill="url(#p47)" />
<rect x="228" y="409" width="1" height="7" fill="url(#p50)" />
<rect x="232" y="409" width="1" height="7" fill="url(#p50)" />
<rect x="236" y="412" width="1" height="4" fill="url(#p47)" />
<rect x="240" y="411" width="1" height="5" fill="url(#p47)" />
<rect x="244" y="413" width="1" height="3" fill="url(#p50)" />
<rect x="248" y="410" width="1" height="6" fill="url(#p47)" />
<rect x="252" y="409" width="1" height="7" fill="url(#p50)" />
<rect x="256" y="413" width="1" height="3" fill="url(#p47)" />
<rect x="260" y="409" width="1" height="7" fill="url(#p50)" />
<rect x="264" y="414" width="1" height="2" fill="url(#p50)" />
<rect x="268" y="409" width="1" height="7" fill="url(#p50)" />
<rect x="272" y="412" width="1" height="4" fill="url(#p47)" />
<rect x="276" y="410" width="1" height="6" fill="url(#p50)" />
<rect x="280" y="409" width="1" height="7" fill="url(#p47)" />
<rect x="284" y="410" width="1" height="6" fill="url(#p50)" />
<rect x="288" y="411" width="1" height="5" fill="url(#p50)" />
<rect x="292" y="408" width="1" height="8" fill="url(#p50)" />
<rect x="296" y="411" width="1" height="5" fill="url(#p50)" />
<rect x="300" y="410" width="1" height="6" fill="url(#p47)" />
<rect x="304" y="409" width="1" height="7" fill="url(#p50)" />
<rect x="308" y="410" width="1" height="6" fill="url(#p50)" />
<rect x="312" y="411" width="1" height="5" fill="url(#p50)" />
<rect x="316" y="412" width="1" height="4" fill="url(#p50)" />
<rect x="320" y="412" width="1" height="4" fill="url(#p47)" />
<rect x="324" y="408" width="1" height="8" fill="url(#p50)" />
<rect x="328" y="413" width="1" height="3" fill="url(#p50)" />
<rect x="332" y="409" width="1" height="7" fill="url(#p50)" />
<rect x="336" y="408" width="1" height="8" fill="url(#p50)" />
<rect x="340" y="412" width="1" height="4" fill="url(#p50)" />
<rect x="344" y="413" width="1" height="3" fill="url(#p50)" />
<rect x="348" y="409" width="1" height="7" fill="url(#p50)" />
<rect x="352" y="412" width="1" height="4" fill="url(#p50)" />
<rect x="356" y="410" width="1" height="6" fill="url(#p50)" />
<rect x="360" y="410" width="1" height="6" fill="url(#p50)" />
<rect x="364" y="411" width="1" height="5" fill="url(#p47)" />
<rect x="368" y="409" width="1" height="7" fill="url(#p50)" />
<rect x="372" y="410" width="1" height="6" fill="url(#p50)" />
<rect x="376" y="412" width="1" height="4" fill="url(#p47)" />
<rect x="380" y="409" width="1" height="7" fill="url(#p47)" />
<rect x="384" y="413" width="1" height="3" fill="url(#p50)" />
<rect x="388" y="413" width="1" height="3" fill="url(#p47)" />
<rect x="392" y="410" width="1" height="6" fill="url(#p50)" />
<rect x="396" y="411" width="1" height="5" fill="url(#p50)" />
<rect x="400" y="413" width="1" height="3" fill="url(#p50)" />
<rect x="404" y="408" width="1" height="8" fill="url(#p50)" />
<rect x="408" y="411" width="1" height="5" fill="url(#p50)" />
<rect x="412" y="413" width="1" height="3" fill="url(#p50)" />
<rect x="416" y="410" width="1" height="6" fill="url(#p47)" />
<rect x="420" y="411" width="1" height="5" fill="url(#p50)" />
<rect x="424" y="414" width="1" height="2" fill="url(#p47)" />
<rect x="428" y="409" width="1" height="7" fill="url(#p47)" />
<rect x="432" y="413" width="1" height="3" fill="url(#p47)" />
<rect x="436" y="408" width="1" height="8" fill="url(#p47)" />
<rect x="440" y="410" width="1" height="6" fill="url(#p47)" />
<rect x="444" y="409" width="1" height="7" fill="url(#p47)" />
<rect x="448" y="408" width="1" height="8" fill="url(#p50)" />
<rect x="452" y="407" width="1" height="9" fill="url(#p50)" />
<rect x="456" y="411" width="1" height="5" fill="url(#p47)" />
<rect x="460" y="411" width="1" height="5" fill="url(#p50)" />
<rect x="464" y="409" width="1" height="7" fill="url(#p47)" />
<rect x="468" y="411" width="1" height="5" fill="url(#p47)" />
<rect x="472" y="409" width="1" height="7" fill="url(#p50)" />
<rect x="476" y="410" width="1" height="6" fill="url(#p50)" />
<rect x="480" y="409" width="1" height="7" fill="url(#p47)" />
<rect x="484" y="408" width="1" height="8" fill="url(#p50)" />
<rect x="488" y="410" width="1" height="6" fill="url(#p47)" />
<rect x="492" y="413" width="1" height="3" fill="url(#p47)" />
<rect x="496" y="407" width="1" height="9" fill="url(#p50)" />
<rect x="500" y="413" width="1" height="3" fill="url(#p47)" />
<rect x="504" y="412" width="1" height="4" fill="url(#p47)" />
<rect x="508" y="410" width="1" height="6" fill="url(#p50)" />
<rect x="512" y="409" width="1" height="7" fill="url(#p50)" />
<rect x="516" y="409" width="1" height="7" fill="url(#p50)" />
<rect x="520" y="413" width="1" height="3" fill="url(#p47)" />
<rect x="524" y="414" width="1" height="2" fill="url(#p47)" />
<rect x="528" y="409" width="1" height="7" fill="url(#p50)" />
<rect x="532" y="409" width="1" height="7" fill="url(#p50)" />
<rect x="536" y="412" width="1" height="4" fill="url(#p50)" />
<rect x="540" y="409" width="1" height="7" fill="url(#p50)" />
<rect x="544" y="409" width="1" height="7" fill="url(#p50)" />
<rect x="548" y="409" width="1" height="7" fill="url(#p47)" />
<rect x="552" y="407" width="1" height="9" fill="url(#p50)" />
<rect x="556" y="410" width="1" height="6" fill="url(#p50)" />
<rect x="560" y="412" width="1" height="4" fill="url(#p47)" />
<rect x="564" y="409" width="1" height="7" fill="url(#p47)" />
<rect x="568" y="411" width="1" height="5" fill="url(#p50)" />
<rect x="572" y="409" width="1" height="7" fill="url(#p50)" />
<rect x="576" y="411" width="1" height="5" fill="url(#p47)" />
<rect x="580" y="414" width="1" height="2" fill="url(#p47)" />
<rect x="584" y="410" width="1" height="6" fill="url(#p47)" />
<rect x="588" y="411" width="1" height="5" fill="url(#p47)" />
<rect x="592" y="413" width="1" height="3" fill="url(#p47)" />
<rect x="596" y="409" width="1" height="7" fill="url(#p50)" />
<rect x="600" y="413" width="1" height="3" fill="url(#p50)" />
<rect x="604" y="410" width="1" height="6" fill="url(#p50)" />
<g shape-rendering="crispEdges" fill="none" stroke-width="1" stroke-linejoin="round">
<polyline stroke="#FFFFFF" points="12.0,345.0 20.0,335.0 30.0,322.0 45.0,300.0 58.0,290.0 72.0,280.0 79.7,270.0 91.3,250.0 101.3,236.0 106.3,231.7 108.0,230.0 114.3,221.0 121.0,215.8 129.3,213.0 139.3,208.0 149.0,201.0 156.0,196.7 161.8,193.0 172.7,193.0 192.7,192.5 201.8,190.0 208.7,187.5 218.7,189.7 230.0,192.5 240.0,201.0 252.0,210.0 260.0,216.0 273.7,223.0 285.0,230.0 293.7,233.0 302.0,234.0 306.3,234.7 318.0,238.0 328.8,241.0 338.0,240.0 348.0,239.0 359.7,236.7 376.3,235.8 389.7,235.0 398.0,231.0 400.7,229.7 410.7,220.0 419.0,211.7 427.3,205.8 437.3,202.0 450.7,199.5 460.7,199.7 474.0,200.8 487.3,202.0 500.7,207.5 514.0,214.0 524.0,218.0 534.0,222.5 544.0,228.0 560.0,236.0 570.0,243.0 580.2,250.0 587.7,256.7 597.7,266.0 602.7,269.7 607.7,271.0"/>
<polyline stroke="#FF0000" points="12.0,276.7 18.0,268.0 24.7,263.0 33.0,256.7 41.3,249.0 48.8,240.0 56.3,225.0 61.3,220.0 65.5,218.7 74.7,209.0 83.0,197.5 93.0,185.0 100.5,171.0 108.0,165.0 116.0,163.0 127.7,167.5 137.7,175.8 147.7,183.0 154.3,187.5 161.0,190.0 167.7,191.0 176.0,199.0 186.0,202.5 194.3,206.7 201.0,209.0 206.0,207.5 212.0,210.0 222.0,213.0 232.0,213.7 240.3,225.0 252.0,237.5 260.3,248.0 268.7,257.5 280.3,267.5 287.8,274.0 295.3,269.0 302.0,264.0 306.3,257.5 316.3,247.0 323.0,245.8 333.8,240.0 346.3,225.8 361.3,212.5 376.3,201.7 384.7,196.0 394.0,196.0 400.7,195.0 410.7,184.0 420.7,176.0 429.0,172.5 437.3,170.8 444.0,172.5 452.3,179.0 460.7,191.0 469.0,206.7 475.7,218.0 484.0,232.5 492.3,245.0 500.7,252.5 509.0,258.0 517.3,260.0 525.7,263.0 532.7,265.0 541.0,265.0 547.7,262.0 559.3,262.0 569.3,264.0 577.7,265.0 584.3,269.7 592.7,281.7 601.0,292.5 607.7,299.7"/>
<polyline stroke="#FFFF00" points="12.0,226.7 19.7,215.3 24.7,224.0 28.8,226.0 33.0,231.7 40.5,241.7 45.5,246.7 48.5,247.5 52.0,244.0 55.5,225.0 58.0,210.0 63.0,180.0 65.5,165.0 68.3,159.0 72.0,166.0 76.3,167.0 80.5,161.7 84.7,163.0 88.5,161.7 94.7,163.0 100.5,159.7 104.7,161.3 108.0,162.0 112.7,162.5 116.8,164.0 124.3,173.0 131.8,199.0 139.3,203.0 143.5,205.8 149.3,200.8 156.0,197.5 163.5,189.0 168.5,188.3 172.7,197.5 179.3,208.0 186.0,218.0 194.3,226.7 200.0,227.5 203.5,221.7 206.0,214.0 208.7,208.0 217.0,199.0 224.5,207.5 232.0,213.0 236.0,227.5 242.0,261.7 247.0,286.7 252.0,294.0 258.7,290.0 265.3,273.0 270.3,261.7 276.0,251.7 282.0,261.0 292.0,266.0 297.8,255.0 302.0,248.0 304.7,241.7 317.0,226.7 323.0,231.7 328.8,235.8 333.0,233.0 338.8,219.0 344.7,203.0 351.3,200.0 356.3,199.0 362.0,192.5 372.0,186.0 380.5,190.0 386.3,198.0 392.0,208.0 398.0,203.0 401.7,193.0 406.7,171.7 411.7,153.0 415.8,144.0 420.8,141.2 425.7,146.0 432.3,159.0 437.3,175.0 442.3,195.0 447.3,212.5 452.3,228.0 456.5,240.0 460.7,238.7 468.0,245.0 473.0,241.0 478.0,245.0 484.0,246.7 489.0,257.5 494.0,266.0 499.0,275.0 504.0,279.0 512.3,273.0 517.3,264.0 520.7,259.0 524.8,258.0 532.7,260.8 538.5,255.0 544.3,250.8 548.5,255.0 553.5,265.0 560.2,276.7 564.3,278.0 569.3,271.7 576.0,269.0 580.2,270.8 584.3,280.8 589.3,300.0 594.3,317.5 600.2,330.0 603.5,331.0 607.7,330.5"/>
<line x1="248" y1="321.5" x2="688" y2="267.5" stroke="#0000FF" stroke-width="1"/>
</g>
<rect x="572" y="282" width="1" height="120" fill="url(#p51)" />
<rect x="760" y="327" width="34" height="11" fill="url(#p52)" />
<text x="764" y="336" fill="#000" font-size="10" text-anchor="start" xml:space="preserve" textLength="26.5" lengthAdjust="spacingAndGlyphs">1.2993</text>
<rect x="7" y="434" width="792" height="2" fill="url(#p6)" />
<rect x="7" y="436" width="792" height="1" fill="#000" />
<rect x="11" y="436" width="80" height="19" fill="#000" />
<rect x="12" y="434" width="78" height="20" fill="url(#p6)" />
<text x="21" y="449" fill="#000" font-size="11" text-anchor="start" xml:space="preserve" textLength="58" lengthAdjust="spacingAndGlyphs">EURUSD,M1</text>
<text x="100" y="449" fill="#7A7A72" font-size="11" text-anchor="start" xml:space="preserve" textLength="67" lengthAdjust="spacingAndGlyphs">EURUSD,Daily</text>
<text x="189.5" y="449" fill="#7A7A72" font-size="11" text-anchor="start" xml:space="preserve" textLength="60.5" lengthAdjust="spacingAndGlyphs">USDJPY,M15</text>
<text x="274" y="449" fill="#7A7A72" font-size="11" text-anchor="start" xml:space="preserve" textLength="76" lengthAdjust="spacingAndGlyphs">USDJPY,Weekly</text>
<text x="374" y="449" fill="#7A7A72" font-size="11" text-anchor="start" xml:space="preserve" textLength="66" lengthAdjust="spacingAndGlyphs">GBPUSD,Daily</text>
<text x="463" y="449" fill="#7A7A72" font-size="11" text-anchor="start" xml:space="preserve" textLength="74" lengthAdjust="spacingAndGlyphs">EURJPY,Weekly</text>
<text x="562" y="449" fill="#7A7A72" font-size="11" text-anchor="start" xml:space="preserve" textLength="53" lengthAdjust="spacingAndGlyphs">GOLD,Daily</text>
<text x="639" y="449" fill="#7A7A72" font-size="11" text-anchor="start" xml:space="preserve" textLength="43" lengthAdjust="spacingAndGlyphs">OIL,Daily</text>
<rect x="179" y="440" width="1" height="12" fill="url(#p53)" />
<rect x="263" y="440" width="1" height="12" fill="url(#p53)" />
<rect x="363" y="440" width="1" height="12" fill="url(#p53)" />
<rect x="451" y="440" width="1" height="12" fill="url(#p53)" />
<rect x="550" y="440" width="1" height="12" fill="url(#p53)" />
<rect x="628" y="440" width="1" height="12" fill="url(#p53)" />
<rect x="695" y="440" width="1" height="12" fill="url(#p53)" />
<path d="M775 443v6l-4-3zM787 443v6l4-3z" fill="#A8A8A0" shape-rendering="auto"/>
<rect x="8" y="458" width="791" height="1" fill="url(#p6)" />
<path d="M11.500 463.500l5 5M16.500 463.500l-5 5" stroke="#000" stroke-width="1.600" shape-rendering="auto"/>
<rect x="8" y="474" width="13" height="74" fill="url(#p54)" />
<text transform="translate(18.300,545) rotate(-90)" fill="#FFFFFF" font-size="11" textLength="43" lengthAdjust="spacingAndGlyphs">Terminal</text>
<rect x="22" y="480" width="754" height="1" fill="url(#p28)" />
<rect x="88" y="462" width="1" height="16" fill="url(#p28)" />
<rect x="89" y="462" width="1" height="16" fill="url(#p6)" />
<rect x="216" y="462" width="1" height="16" fill="url(#p28)" />
<rect x="217" y="462" width="1" height="16" fill="url(#p6)" />
<rect x="268" y="462" width="1" height="16" fill="url(#p28)" />
<rect x="269" y="462" width="1" height="16" fill="url(#p6)" />
<rect x="310" y="462" width="1" height="16" fill="url(#p28)" />
<rect x="311" y="462" width="1" height="16" fill="url(#p6)" />
<rect x="360" y="462" width="1" height="16" fill="url(#p28)" />
<rect x="361" y="462" width="1" height="16" fill="url(#p6)" />
<rect x="418" y="462" width="1" height="16" fill="url(#p28)" />
<rect x="419" y="462" width="1" height="16" fill="url(#p6)" />
<rect x="478" y="462" width="1" height="16" fill="url(#p28)" />
<rect x="479" y="462" width="1" height="16" fill="url(#p6)" />
<rect x="535" y="462" width="1" height="16" fill="url(#p28)" />
<rect x="536" y="462" width="1" height="16" fill="url(#p6)" />
<rect x="592" y="462" width="1" height="16" fill="url(#p28)" />
<rect x="593" y="462" width="1" height="16" fill="url(#p6)" />
<rect x="650" y="462" width="1" height="16" fill="url(#p28)" />
<rect x="651" y="462" width="1" height="16" fill="url(#p6)" />
<rect x="708" y="462" width="1" height="16" fill="url(#p28)" />
<rect x="709" y="462" width="1" height="16" fill="url(#p6)" />
<rect x="775" y="462" width="1" height="16" fill="url(#p28)" />
<rect x="776" y="462" width="1" height="16" fill="url(#p6)" />
<text x="24" y="475" fill="#000" font-size="11" text-anchor="start" xml:space="preserve" textLength="29" lengthAdjust="spacingAndGlyphs">Orden</text>
<text x="210" y="475" fill="#000" font-size="11" text-anchor="end" xml:space="preserve" textLength="34" lengthAdjust="spacingAndGlyphs">Tiempo</text>
<text x="226" y="475" fill="#000" font-size="11" text-anchor="start" xml:space="preserve" textLength="20" lengthAdjust="spacingAndGlyphs">Tipo</text>
<path d="M257 477l5-7" stroke="#A9A696" shape-rendering="auto"/>
<text x="277" y="475" fill="#000" font-size="11" text-anchor="start" xml:space="preserve" textLength="22" lengthAdjust="spacingAndGlyphs">Vo...</text>
<text x="317" y="475" fill="#000" font-size="11" text-anchor="start" xml:space="preserve" textLength="36" lengthAdjust="spacingAndGlyphs">Simb...</text>
<text x="412" y="475" fill="#000" font-size="11" text-anchor="end" xml:space="preserve" textLength="29" lengthAdjust="spacingAndGlyphs">Precio</text>
<text x="471" y="475" fill="#000" font-size="11" text-anchor="end" xml:space="preserve" textLength="22" lengthAdjust="spacingAndGlyphs">S / L</text>
<text x="529" y="475" fill="#000" font-size="11" text-anchor="end" xml:space="preserve" textLength="22" lengthAdjust="spacingAndGlyphs">T / P</text>
<text x="586" y="475" fill="#000" font-size="11" text-anchor="end" xml:space="preserve" textLength="29" lengthAdjust="spacingAndGlyphs">Precio</text>
<text x="603" y="475" fill="#000" font-size="11" text-anchor="start" xml:space="preserve" textLength="41" lengthAdjust="spacingAndGlyphs">Comisi¢n</text>
<text x="702" y="475" fill="#000" font-size="11" text-anchor="end" xml:space="preserve" textLength="25" lengthAdjust="spacingAndGlyphs">Swap</text>
<text x="769" y="475" fill="#000" font-size="11" text-anchor="end" xml:space="preserve" textLength="48" lengthAdjust="spacingAndGlyphs">Beneficios</text>
<rect x="22" y="481" width="754" height="20" fill="url(#p55)" />
<g shape-rendering="auto"><path d="M23.500 484.500h5l2 2v8h-7z" fill="#FFF" stroke="#777" stroke-width=".8"/><circle cx="28.500" cy="495" r="3.200" fill="#E8401C" stroke="#8A1808" stroke-width=".6"/></g>
<text x="32" y="495" fill="#FFFFFF" font-size="11" text-anchor="start" xml:space="preserve" textLength="40" lengthAdjust="spacingAndGlyphs">14067...</text>
<text x="212" y="495" fill="#FFFFFF" font-size="11" text-anchor="end" xml:space="preserve" textLength="87" lengthAdjust="spacingAndGlyphs">2009.04.22 16:28</text>
<text x="264" y="495" fill="#FFFFFF" font-size="11" text-anchor="end" xml:space="preserve" textLength="17" lengthAdjust="spacingAndGlyphs">sell</text>
<text x="304" y="495" fill="#FFFFFF" font-size="11" text-anchor="end" xml:space="preserve" textLength="21" lengthAdjust="spacingAndGlyphs">0.10</text>
<text x="323" y="495" fill="#FFFFFF" font-size="11" text-anchor="start" xml:space="preserve" textLength="33" lengthAdjust="spacingAndGlyphs">eurusd</text>
<text x="413" y="495" fill="#FFFFFF" font-size="11" text-anchor="end" xml:space="preserve" textLength="33" lengthAdjust="spacingAndGlyphs">1.3027</text>
<text x="472" y="495" fill="#FFFFFF" font-size="11" text-anchor="end" xml:space="preserve" textLength="33" lengthAdjust="spacingAndGlyphs">1.3008</text>
<text x="530" y="495" fill="#FFFFFF" font-size="11" text-anchor="end" xml:space="preserve" textLength="33" lengthAdjust="spacingAndGlyphs">0.0000</text>
<text x="588" y="495" fill="#FFFFFF" font-size="11" text-anchor="end" xml:space="preserve" textLength="33" lengthAdjust="spacingAndGlyphs">1.2995</text>
<text x="646" y="495" fill="#FFFFFF" font-size="11" text-anchor="end" xml:space="preserve" textLength="21" lengthAdjust="spacingAndGlyphs">0.00</text>
<text x="704" y="495" fill="#FFFFFF" font-size="11" text-anchor="end" xml:space="preserve" textLength="21" lengthAdjust="spacingAndGlyphs">0.00</text>
<text x="771" y="495" fill="#FFFFFF" font-size="11" text-anchor="end" xml:space="preserve" textLength="27" lengthAdjust="spacingAndGlyphs">24.62</text>
<rect x="22" y="501" width="754" height="8" fill="url(#p56)" />
<clipPath id="c2"><rect x="22" y="501" width="754" height="8"/></clipPath><g clip-path="url(#c2)">
<rect x="23" y="504" width="6" height="6" fill="url(#p6)" />
<text x="32" y="516" fill="#000" font-size="11" text-anchor="start" xml:space="preserve" textLength="330" lengthAdjust="spacingAndGlyphs">Balance: 28 231.58  Equidad: 28 729.31  Margen:</text>
<text x="392" y="516" fill="#000" font-size="11" text-anchor="start" xml:space="preserve" textLength="70" lengthAdjust="spacingAndGlyphs">500.00  Libre</text>
<text x="530" y="516" fill="#000" font-size="11" text-anchor="end" xml:space="preserve" textLength="50" lengthAdjust="spacingAndGlyphs">5778.19%</text>
<text x="771" y="516" fill="#000" font-size="11" text-anchor="end" xml:space="preserve" textLength="44" lengthAdjust="spacingAndGlyphs">1 269.50</text>
</g>
<rect x="777" y="460" width="19" height="49" fill="url(#p57)" />
<rect x="777.500" y="462.5" width="17" height="17" rx="2" fill="#C3D1FA" stroke="#FFFFFF" shape-rendering="auto"/>
<path d="M782 473l4 -4l4 4" fill="none" stroke="#4D6185" stroke-width="2" shape-rendering="auto"/>
<rect x="777.500" y="489.5" width="17" height="17" rx="2" fill="#C3D1FA" stroke="#FFFFFF" shape-rendering="auto"/>
<path d="M782 496l4 4l4 -4" fill="none" stroke="#4D6185" stroke-width="2" shape-rendering="auto"/>
<rect x="777.500" y="480.500" width="17" height="7" rx="2" fill="#C3D1FA" stroke="#FFFFFF" shape-rendering="auto"/>
<rect x="22" y="509" width="754" height="18" fill="url(#p57)" />
<rect x="22.500" y="509.500" width="17" height="16" rx="2" fill="#C3D1FA" stroke="#FFFFFF" shape-rendering="auto"/>
<path d="M33 514l-4 4l4 4" fill="none" stroke="#4D6185" stroke-width="2" shape-rendering="auto"/>
<rect x="758.500" y="509.500" width="17" height="16" rx="2" fill="#C3D1FA" stroke="#FFFFFF" shape-rendering="auto"/>
<path d="M765 514l4 4l-4 4" fill="none" stroke="#4D6185" stroke-width="2" shape-rendering="auto"/>
<rect x="51.500" y="509.500" width="705" height="16" rx="2" fill="#C9D6FB" stroke="#FFFFFF" shape-rendering="auto"/>
<rect x="400" y="514" width="1" height="7" fill="url(#p58)" />
<rect x="402" y="514" width="1" height="7" fill="url(#p58)" />
<rect x="404" y="514" width="1" height="7" fill="url(#p58)" />
<rect x="406" y="514" width="1" height="7" fill="url(#p58)" />
<rect x="22" y="527" width="774" height="1" fill="#000" />
<rect x="25" y="527" width="80" height="19" fill="#000" />
<rect x="26" y="527" width="78" height="18" fill="url(#p6)" />
<text x="35" y="540" fill="#000" font-size="11" text-anchor="start" xml:space="preserve" textLength="59" lengthAdjust="spacingAndGlyphs">Operaciones</text>
<text x="114" y="540" fill="#7A7A72" font-size="11" text-anchor="start" xml:space="preserve" textLength="94" lengthAdjust="spacingAndGlyphs">Historial de cuentas</text>
<text x="228" y="540" fill="#7A7A72" font-size="11" text-anchor="start" xml:space="preserve" textLength="31" lengthAdjust="spacingAndGlyphs">Avisos</text>
<text x="279" y="540" fill="#7A7A72" font-size="11" text-anchor="start" xml:space="preserve" textLength="29" lengthAdjust="spacingAndGlyphs">Buz¢n</text>
<text x="328" y="540" fill="#7A7A72" font-size="11" text-anchor="start" xml:space="preserve" textLength="27" lengthAdjust="spacingAndGlyphs">Diario</text>
<rect x="219" y="532" width="1" height="12" fill="url(#p53)" />
<rect x="271" y="532" width="1" height="12" fill="url(#p53)" />
<rect x="319" y="532" width="1" height="12" fill="url(#p53)" />
<rect x="367" y="532" width="1" height="12" fill="url(#p53)" />
<rect x="8" y="547" width="791" height="3" fill="url(#p25)" />
<rect x="8" y="550" width="791" height="1" fill="url(#p59)" />
<rect x="8" y="551" width="791" height="1" fill="url(#p25)" />
<text x="9" y="566" fill="#000" font-size="11" text-anchor="start" xml:space="preserve" textLength="81.5" lengthAdjust="spacingAndGlyphs">Market Overview</text>
<text x="692" y="566" fill="#000" font-size="11" text-anchor="start" xml:space="preserve" textLength="41" lengthAdjust="spacingAndGlyphs">713/2 kb</text>
<rect x="107" y="554" width="1" height="16" fill="url(#p4)" />
<rect x="108" y="554" width="1" height="16" fill="url(#p6)" />
<rect x="225" y="554" width="1" height="16" fill="url(#p4)" />
<rect x="226" y="554" width="1" height="16" fill="url(#p6)" />
<rect x="310" y="554" width="1" height="16" fill="url(#p4)" />
<rect x="311" y="554" width="1" height="16" fill="url(#p6)" />
<rect x="474" y="554" width="1" height="16" fill="url(#p4)" />
<rect x="475" y="554" width="1" height="16" fill="url(#p6)" />
<rect x="557" y="554" width="1" height="16" fill="url(#p4)" />
<rect x="558" y="554" width="1" height="16" fill="url(#p6)" />
<rect x="637" y="554" width="1" height="16" fill="url(#p4)" />
<rect x="638" y="554" width="1" height="16" fill="url(#p6)" />
<rect x="642" y="558" width="2" height="10" fill="url(#p60)" />
<rect x="642" y="565" width="2" height="3" fill="url(#p61)" />
<rect x="645" y="558" width="2" height="10" fill="url(#p60)" />
<rect x="645" y="564" width="2" height="4" fill="url(#p61)" />
<rect x="648" y="558" width="2" height="10" fill="url(#p60)" />
<rect x="648" y="563" width="2" height="5" fill="url(#p61)" />
<rect x="651" y="558" width="2" height="10" fill="url(#p60)" />
<rect x="651" y="562" width="2" height="6" fill="url(#p61)" />
<rect x="655" y="558" width="2" height="10" fill="url(#p60)" />
<rect x="655" y="561" width="2" height="7" fill="url(#p61)" />
<rect x="658" y="558" width="2" height="10" fill="url(#p60)" />
<rect x="658" y="560" width="2" height="8" fill="url(#p61)" />
<rect x="661" y="558" width="2" height="10" fill="url(#p60)" />
<rect x="661" y="559" width="2" height="9" fill="url(#p61)" />
<path d="M785.5 571.500l12-12M789.500 571.500l8-8M793.500 571.500l4-4" stroke="#8A8A80" stroke-width="1.300" shape-rendering="auto"/><path d="M787 571.500l10.500-10.500M791 571.500l6.500-6.500" stroke="#FFFFFF" stroke-width="1.200" shape-rendering="auto"/>
<rect x="475" y="581" width="1" height="15" fill="url(#p28)" />
<rect x="476" y="581" width="1" height="15" fill="url(#p6)" />
<rect x="508" y="581" width="1" height="15" fill="url(#p28)" />
<rect x="509" y="581" width="1" height="15" fill="url(#p6)" />
<rect x="520" y="581" width="1" height="15" fill="url(#p28)" />
<rect x="521" y="581" width="1" height="15" fill="url(#p6)" />
<rect x="532" y="581" width="1" height="15" fill="url(#p28)" />
<rect x="533" y="581" width="1" height="15" fill="url(#p6)" />
<rect x="545" y="581" width="1" height="15" fill="url(#p28)" />
<rect x="546" y="581" width="1" height="15" fill="url(#p6)" />
<rect x="577" y="581" width="1" height="15" fill="url(#p28)" />
<rect x="578" y="581" width="1" height="15" fill="url(#p6)" />
<rect x="605" y="581" width="1" height="15" fill="url(#p28)" />
<rect x="606" y="581" width="1" height="15" fill="url(#p6)" />
<g shape-rendering="auto"><circle cx="618" cy="588.5" r="6.5" fill="#2E6AD8" stroke="#123A8A" stroke-width=".8"/><path d="M613.5 586q2-3.500 5-2.500q2.500 1 .5 3q-2 1-2.500 3q-2.500-.5-3-3.500z M620.500 589q2.500-.5 2.500 1.500q-1 2.500-3 2.500q-.8-2 .5-4z" fill="#3FC03F"/></g>
<text x="629" y="593" fill="#000" font-size="12" text-anchor="start" xml:space="preserve" textLength="46" lengthAdjust="spacingAndGlyphs">Internet</text>
<g shape-rendering="auto"><rect x="5.500" y="581.500" width="11" height="14" fill="#DADFF8" stroke="#8A94C8" stroke-width=".8"/><path d="M16.800 582v14h-11" fill="none" stroke="#24246A" stroke-width="1.200"/><rect x="6" y="582" width="7" height="2" fill="#FFFFFF"/><circle cx="7.800" cy="589.500" r="4.300" fill="none" stroke="#1C5EE0" stroke-width="2.600"/><path d="M3.500 589.600h8.600" stroke="#1C5EE0" stroke-width="1.800"/><path d="M8.500 590.600h5v2h-5z" fill="#DADFF8"/><path d="M2.500 592q2-6.500 9-8" fill="none" stroke="#38A8F0" stroke-width="1.100"/></g></svg></body></html>
